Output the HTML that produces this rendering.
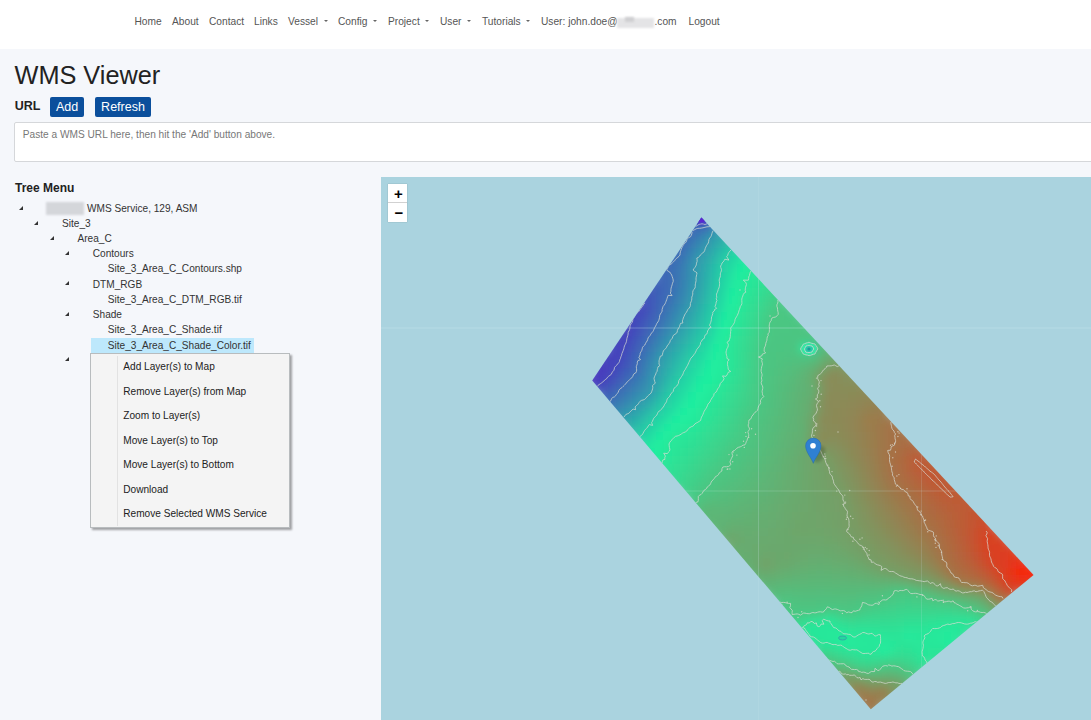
<!DOCTYPE html>
<html><head><meta charset="utf-8">
<style>
*{box-sizing:border-box;margin:0;padding:0}
html,body{width:1091px;height:720px;overflow:hidden;background:#f5f7fb;font-family:"Liberation Sans",sans-serif;}
.a{position:absolute;white-space:nowrap}
#hdr{position:absolute;left:0;top:0;width:1091px;height:49px;background:#fff}
.nav{font-size:10.2px;color:#555;top:16px;line-height:12px}
.car{position:absolute;width:0;height:0;border-left:2.5px solid transparent;border-right:2.5px solid transparent;border-top:2.8px solid #666;top:20px}
h1{position:absolute;left:14.5px;top:60px;font-size:25.3px;font-weight:normal;color:#222;line-height:30px;white-space:nowrap}
.url{left:14.8px;top:99px;font-size:12.5px;font-weight:bold;color:#222;line-height:14px}
.btn{position:absolute;top:97px;height:20px;background:#0b4f9c;border-radius:2px;color:#fff;font-size:12.5px;line-height:20px;text-align:center}
#ta{position:absolute;left:14px;top:122px;width:1100px;height:40px;background:#fff;border:1px solid #d5d7da;border-radius:2px}
.ph{left:22.8px;top:129px;font-size:10.15px;color:#777;line-height:12px}
.tm{left:15px;top:181.5px;font-size:12px;font-weight:bold;color:#222;line-height:13px}
.ti{font-size:10.1px;color:#333;line-height:12px;margin-top:1px}
.tri{position:absolute;width:0;height:0;border-left:4px solid transparent;border-bottom:4px solid #333}
#sel{position:absolute;left:91px;top:338px;width:163px;height:15.5px;background:#bde8fc}
#menu{position:absolute;left:90px;top:353px;width:200px;height:175px;background:#f4f4f4;border:1px solid #b8bcbe;box-shadow:2px 2px 2px rgba(0,0,0,.35)}
#menu .sep{position:absolute;left:26px;top:2px;width:1px;height:170px;background:#e2e2e2}
.mi{font-size:10.1px;color:#222;line-height:12px;margin-top:1px}
#map{position:absolute;left:381px;top:177px;width:710px;height:543px;background:#aad3df;overflow:hidden}
.zb{position:absolute;left:7px;width:19px;height:19px;background:#fff;text-align:center;color:#000;font-weight:bold;padding-left:2px;box-shadow:0 0 1px rgba(0,0,0,.3)}
svg .cells rect{width:8px;height:8px}
</style></head><body>
<div id="hdr"></div>
<div class="a nav" style="left:134.5px">Home</div>
<div class="a nav" style="left:172px">About</div>
<div class="a nav" style="left:209px">Contact</div>
<div class="a nav" style="left:254px">Links</div>
<div class="a nav" style="left:288px">Vessel</div><div class="car" style="left:323.5px"></div>
<div class="a nav" style="left:338px">Config</div><div class="car" style="left:372.5px"></div>
<div class="a nav" style="left:388px">Project</div><div class="car" style="left:425px"></div>
<div class="a nav" style="left:440px">User</div><div class="car" style="left:466.5px"></div>
<div class="a nav" style="left:482px">Tutorials</div><div class="car" style="left:525.5px"></div>
<div class="a nav" style="left:541px">User: john.doe@</div>
<div style="position:absolute;left:617px;top:18px;width:37px;height:10px;background:#e4e4e6;filter:blur(1px)"></div><div style="position:absolute;left:625px;top:17px;width:9px;height:5px;background:#cfcfd2;filter:blur(1px)"></div>
<div class="a nav" style="left:654.5px">.com</div>
<div class="a nav" style="left:688.5px">Logout</div>

<h1>WMS Viewer</h1>
<div class="a url">URL</div>
<div class="btn" style="left:50px;width:34px">Add</div>
<div class="btn" style="left:95px;width:56px">Refresh</div>
<div id="ta"></div>
<div class="a ph">Paste a WMS URL here, then hit the 'Add' button above.</div>

<div class="a tm">Tree Menu</div>
<div id="sel"></div>
<div class="tri" style="left:19px;top:206px"></div>
<div style="position:absolute;left:46px;top:202px;width:38px;height:13px;background:#d4d6da;filter:blur(1px)"></div>
<div class="a ti" style="left:87px;top:202px">WMS Service, 129, ASM</div>
<div class="tri" style="left:34px;top:221px"></div>
<div class="a ti" style="left:62px;top:217px">Site_3</div>
<div class="tri" style="left:49.5px;top:236px"></div>
<div class="a ti" style="left:77.5px;top:232px">Area_C</div>
<div class="tri" style="left:65px;top:251px"></div>
<div class="a ti" style="left:92.8px;top:247px">Contours</div>
<div class="a ti" style="left:107.8px;top:262px">Site_3_Area_C_Contours.shp</div>
<div class="tri" style="left:65px;top:281px"></div>
<div class="a ti" style="left:92.8px;top:278px">DTM_RGB</div>
<div class="a ti" style="left:107.8px;top:293px">Site_3_Area_C_DTM_RGB.tif</div>
<div class="tri" style="left:65px;top:312px"></div>
<div class="a ti" style="left:92.8px;top:308px">Shade</div>
<div class="a ti" style="left:107.8px;top:323px">Site_3_Area_C_Shade.tif</div>
<div class="a ti" style="left:107.8px;top:339px">Site_3_Area_C_Shade_Color.tif</div>
<div class="tri" style="left:65px;top:357px"></div>

<div id="menu"><div class="sep"></div></div>
<div class="a mi" style="left:123.3px;top:360px">Add Layer(s) to Map</div>
<div class="a mi" style="left:123.3px;top:385px">Remove Layer(s) from Map</div>
<div class="a mi" style="left:123.3px;top:409px">Zoom to Layer(s)</div>
<div class="a mi" style="left:123.3px;top:434px">Move Layer(s) to Top</div>
<div class="a mi" style="left:123.3px;top:458px">Move Layer(s) to Bottom</div>
<div class="a mi" style="left:123.3px;top:483px">Download</div>
<div class="a mi" style="left:123.3px;top:507px">Remove Selected WMS Service</div>

<div id="map">
<svg style="position:absolute;left:0;top:0" width="710" height="543" viewBox="381 177 710 543">
<defs><clipPath id="cp"><polygon points="701.4,217.5 1033.6,575.0 870.8,709.2 592.2,380.6"/></clipPath>
<filter id="bl" x="-5%" y="-5%" width="110%" height="110%"><feGaussianBlur stdDeviation="4"/></filter><filter id="bl2"><feGaussianBlur stdDeviation="1.5"/></filter></defs>
<g clip-path="url(#cp)"><g filter="url(#bl)" class="cells"><rect x="696" y="208" fill="#4152ba"/><rect x="688" y="216" fill="#4059b9"/><rect x="696" y="216" fill="#4445bc"/><rect x="704" y="216" fill="#405ab8"/><rect x="688" y="224" fill="#3d66b7"/><rect x="696" y="224" fill="#3c6cb6"/><rect x="704" y="224" fill="#3c6cb6"/><rect x="712" y="224" fill="#3392af"/><rect x="680" y="232" fill="#3c69b6"/><rect x="688" y="232" fill="#3b6fb5"/><rect x="696" y="232" fill="#387cb3"/><rect x="704" y="232" fill="#3390b0"/><rect x="712" y="232" fill="#309fad"/><rect x="720" y="232" fill="#2ea9ac"/><rect x="672" y="240" fill="#3c68b6"/><rect x="680" y="240" fill="#3c6cb6"/><rect x="688" y="240" fill="#3979b3"/><rect x="696" y="240" fill="#3589b1"/><rect x="704" y="240" fill="#319aae"/><rect x="712" y="240" fill="#2ea8ac"/><rect x="720" y="240" fill="#2bb6a9"/><rect x="728" y="240" fill="#28c4a7"/><rect x="672" y="248" fill="#3c6ab6"/><rect x="680" y="248" fill="#3a72b5"/><rect x="688" y="248" fill="#3684b2"/><rect x="696" y="248" fill="#3295af"/><rect x="704" y="248" fill="#30a2ad"/><rect x="712" y="248" fill="#2cb2aa"/><rect x="720" y="248" fill="#28c3a7"/><rect x="728" y="248" fill="#25d0a5"/><rect x="736" y="248" fill="#23daa4"/><rect x="664" y="256" fill="#3c69b6"/><rect x="672" y="256" fill="#3c6cb6"/><rect x="680" y="256" fill="#387ab3"/><rect x="688" y="256" fill="#348eb0"/><rect x="696" y="256" fill="#309ead"/><rect x="704" y="256" fill="#2eaaab"/><rect x="712" y="256" fill="#2abba9"/><rect x="720" y="256" fill="#26cea6"/><rect x="728" y="256" fill="#24d7a4"/><rect x="736" y="256" fill="#21e3a2"/><rect x="744" y="256" fill="#1eeea0"/><rect x="656" y="264" fill="#3d66b7"/><rect x="664" y="264" fill="#3c6cb6"/><rect x="672" y="264" fill="#3a72b5"/><rect x="680" y="264" fill="#3780b2"/><rect x="688" y="264" fill="#3393af"/><rect x="696" y="264" fill="#30a1ad"/><rect x="704" y="264" fill="#2cb0aa"/><rect x="712" y="264" fill="#28c2a8"/><rect x="720" y="264" fill="#25d2a5"/><rect x="728" y="264" fill="#22dea3"/><rect x="736" y="264" fill="#1feba1"/><rect x="744" y="264" fill="#21ed9e"/><rect x="752" y="264" fill="#25ea9b"/><rect x="656" y="272" fill="#3d65b7"/><rect x="664" y="272" fill="#3c6ab6"/><rect x="672" y="272" fill="#3a72b4"/><rect x="680" y="272" fill="#3782b2"/><rect x="688" y="272" fill="#3392af"/><rect x="696" y="272" fill="#2fa2ad"/><rect x="704" y="272" fill="#2cb3aa"/><rect x="712" y="272" fill="#28c5a7"/><rect x="720" y="272" fill="#24d5a4"/><rect x="728" y="272" fill="#21e4a2"/><rect x="736" y="272" fill="#1fef9f"/><rect x="744" y="272" fill="#27e79a"/><rect x="752" y="272" fill="#29e699"/><rect x="760" y="272" fill="#2ce396"/><rect x="648" y="280" fill="#3f5fb8"/><rect x="656" y="280" fill="#3d64b7"/><rect x="664" y="280" fill="#3c6ab6"/><rect x="672" y="280" fill="#3a73b4"/><rect x="680" y="280" fill="#3684b2"/><rect x="688" y="280" fill="#3393af"/><rect x="696" y="280" fill="#2fa4ac"/><rect x="704" y="280" fill="#2bb6a9"/><rect x="712" y="280" fill="#27c9a6"/><rect x="720" y="280" fill="#23d8a4"/><rect x="728" y="280" fill="#20e8a1"/><rect x="736" y="280" fill="#21ed9e"/><rect x="744" y="280" fill="#28e799"/><rect x="752" y="280" fill="#2ce397"/><rect x="760" y="280" fill="#30df94"/><rect x="768" y="280" fill="#35db91"/><rect x="640" y="288" fill="#4156b9"/><rect x="648" y="288" fill="#3f5cb8"/><rect x="656" y="288" fill="#3d64b7"/><rect x="664" y="288" fill="#3c6ab6"/><rect x="672" y="288" fill="#3977b4"/><rect x="680" y="288" fill="#3587b1"/><rect x="688" y="288" fill="#3297af"/><rect x="696" y="288" fill="#2ea7ac"/><rect x="704" y="288" fill="#2ab9a9"/><rect x="712" y="288" fill="#26cba6"/><rect x="720" y="288" fill="#23dba3"/><rect x="728" y="288" fill="#1feda0"/><rect x="736" y="288" fill="#23eb9c"/><rect x="744" y="288" fill="#2ae598"/><rect x="752" y="288" fill="#2fe095"/><rect x="760" y="288" fill="#34db91"/><rect x="768" y="288" fill="#3ad68d"/><rect x="776" y="288" fill="#3fd28a"/><rect x="640" y="296" fill="#424fba"/><rect x="648" y="296" fill="#405ab9"/><rect x="656" y="296" fill="#3d65b7"/><rect x="664" y="296" fill="#3b6eb5"/><rect x="672" y="296" fill="#387db3"/><rect x="680" y="296" fill="#348cb0"/><rect x="688" y="296" fill="#319aae"/><rect x="696" y="296" fill="#2dacab"/><rect x="704" y="296" fill="#29bda8"/><rect x="712" y="296" fill="#26cea6"/><rect x="720" y="296" fill="#22e0a3"/><rect x="728" y="296" fill="#1ef0a0"/><rect x="736" y="296" fill="#25e99b"/><rect x="744" y="296" fill="#2ce397"/><rect x="752" y="296" fill="#32de93"/><rect x="760" y="296" fill="#39d78e"/><rect x="768" y="296" fill="#40d089"/><rect x="776" y="296" fill="#48c984"/><rect x="632" y="304" fill="#4447bc"/><rect x="640" y="304" fill="#4448bb"/><rect x="648" y="304" fill="#405ab9"/><rect x="656" y="304" fill="#3d68b6"/><rect x="664" y="304" fill="#3a74b4"/><rect x="672" y="304" fill="#3683b2"/><rect x="680" y="304" fill="#3392af"/><rect x="688" y="304" fill="#30a1ad"/><rect x="696" y="304" fill="#2cb1aa"/><rect x="704" y="304" fill="#28c2a7"/><rect x="712" y="304" fill="#25d2a5"/><rect x="720" y="304" fill="#21e5a2"/><rect x="728" y="304" fill="#20ee9f"/><rect x="736" y="304" fill="#27e79a"/><rect x="744" y="304" fill="#2ee195"/><rect x="752" y="304" fill="#35db91"/><rect x="760" y="304" fill="#3cd48c"/><rect x="768" y="304" fill="#45cc86"/><rect x="776" y="304" fill="#4ac783"/><rect x="784" y="304" fill="#49c883"/><rect x="624" y="312" fill="#4447bc"/><rect x="632" y="312" fill="#4447bc"/><rect x="640" y="312" fill="#4251ba"/><rect x="648" y="312" fill="#3f5eb8"/><rect x="656" y="312" fill="#3c6cb6"/><rect x="664" y="312" fill="#387bb3"/><rect x="672" y="312" fill="#358ab1"/><rect x="680" y="312" fill="#319aae"/><rect x="688" y="312" fill="#2ea8ac"/><rect x="696" y="312" fill="#2bb7a9"/><rect x="704" y="312" fill="#27c7a7"/><rect x="712" y="312" fill="#24d7a4"/><rect x="720" y="312" fill="#1feaa1"/><rect x="728" y="312" fill="#23ec9d"/><rect x="736" y="312" fill="#2ae598"/><rect x="744" y="312" fill="#30df94"/><rect x="752" y="312" fill="#38d88f"/><rect x="760" y="312" fill="#40d089"/><rect x="768" y="312" fill="#49c883"/><rect x="776" y="312" fill="#4bc682"/><rect x="784" y="312" fill="#4ac782"/><rect x="792" y="312" fill="#4bc682"/><rect x="624" y="320" fill="#4445bc"/><rect x="632" y="320" fill="#434bbb"/><rect x="640" y="320" fill="#4058b9"/><rect x="648" y="320" fill="#3d65b7"/><rect x="656" y="320" fill="#3a72b5"/><rect x="664" y="320" fill="#3782b2"/><rect x="672" y="320" fill="#3392af"/><rect x="680" y="320" fill="#30a0ad"/><rect x="688" y="320" fill="#2daeab"/><rect x="696" y="320" fill="#2abda8"/><rect x="704" y="320" fill="#26cba6"/><rect x="712" y="320" fill="#22dca3"/><rect x="720" y="320" fill="#1ef0a0"/><rect x="728" y="320" fill="#26e99b"/><rect x="736" y="320" fill="#2ce397"/><rect x="744" y="320" fill="#33dd92"/><rect x="752" y="320" fill="#3bd58d"/><rect x="760" y="320" fill="#43cd87"/><rect x="768" y="320" fill="#4bc682"/><rect x="776" y="320" fill="#4bc682"/><rect x="784" y="320" fill="#4bc682"/><rect x="792" y="320" fill="#4cc582"/><rect x="800" y="320" fill="#4dc481"/><rect x="616" y="328" fill="#4445bc"/><rect x="624" y="328" fill="#4445bc"/><rect x="632" y="328" fill="#4250ba"/><rect x="640" y="328" fill="#3f5eb8"/><rect x="648" y="328" fill="#3c6cb6"/><rect x="656" y="328" fill="#387ab3"/><rect x="664" y="328" fill="#358ab1"/><rect x="672" y="328" fill="#319aae"/><rect x="680" y="328" fill="#2ea7ac"/><rect x="688" y="328" fill="#2bb5aa"/><rect x="696" y="328" fill="#28c3a7"/><rect x="704" y="328" fill="#26cea6"/><rect x="712" y="328" fill="#21e2a2"/><rect x="720" y="328" fill="#20ee9f"/><rect x="728" y="328" fill="#28e799"/><rect x="736" y="328" fill="#2ee195"/><rect x="744" y="328" fill="#35da91"/><rect x="752" y="328" fill="#3dd38b"/><rect x="760" y="328" fill="#45cb86"/><rect x="768" y="328" fill="#4bc682"/><rect x="776" y="328" fill="#4bc682"/><rect x="784" y="328" fill="#4bc682"/><rect x="792" y="328" fill="#4cc581"/><rect x="800" y="328" fill="#4dc581"/><rect x="808" y="328" fill="#4ec380"/><rect x="608" y="336" fill="#4544bc"/><rect x="616" y="336" fill="#4445bc"/><rect x="624" y="336" fill="#4447bc"/><rect x="632" y="336" fill="#4156b9"/><rect x="640" y="336" fill="#3d65b7"/><rect x="648" y="336" fill="#3a73b4"/><rect x="656" y="336" fill="#3683b2"/><rect x="664" y="336" fill="#3394af"/><rect x="672" y="336" fill="#30a1ad"/><rect x="680" y="336" fill="#2dafab"/><rect x="688" y="336" fill="#29bda8"/><rect x="696" y="336" fill="#26caa6"/><rect x="704" y="336" fill="#24d7a4"/><rect x="712" y="336" fill="#20e9a1"/><rect x="720" y="336" fill="#22ec9d"/><rect x="728" y="336" fill="#29e699"/><rect x="736" y="336" fill="#30df94"/><rect x="744" y="336" fill="#37d98f"/><rect x="752" y="336" fill="#3fd18a"/><rect x="760" y="336" fill="#48c984"/><rect x="768" y="336" fill="#4bc682"/><rect x="776" y="336" fill="#4cc582"/><rect x="784" y="336" fill="#4cc581"/><rect x="792" y="336" fill="#4cc582"/><rect x="800" y="336" fill="#4bc682"/><rect x="808" y="336" fill="#4cc581"/><rect x="816" y="336" fill="#51c07e"/><rect x="608" y="344" fill="#4544bc"/><rect x="616" y="344" fill="#4445bc"/><rect x="624" y="344" fill="#434cbb"/><rect x="632" y="344" fill="#3f5db8"/><rect x="640" y="344" fill="#3c6cb6"/><rect x="648" y="344" fill="#387cb3"/><rect x="656" y="344" fill="#348db0"/><rect x="664" y="344" fill="#319cae"/><rect x="672" y="344" fill="#2ea9ac"/><rect x="680" y="344" fill="#2bb7a9"/><rect x="688" y="344" fill="#28c5a7"/><rect x="696" y="344" fill="#25d1a5"/><rect x="704" y="344" fill="#22dfa3"/><rect x="712" y="344" fill="#1eeea0"/><rect x="720" y="344" fill="#24eb9c"/><rect x="728" y="344" fill="#2ae498"/><rect x="736" y="344" fill="#31de93"/><rect x="744" y="344" fill="#39d78e"/><rect x="752" y="344" fill="#41cf89"/><rect x="760" y="344" fill="#4bc682"/><rect x="768" y="344" fill="#4cc582"/><rect x="776" y="344" fill="#4cc581"/><rect x="784" y="344" fill="#4dc481"/><rect x="792" y="344" fill="#4cc581"/><rect x="800" y="344" fill="#1feaa1"/><rect x="808" y="344" fill="#28c3a7"/><rect x="816" y="344" fill="#50c17f"/><rect x="824" y="344" fill="#5cb677"/><rect x="600" y="352" fill="#4541bd"/><rect x="608" y="352" fill="#4543bc"/><rect x="616" y="352" fill="#4445bc"/><rect x="624" y="352" fill="#4152ba"/><rect x="632" y="352" fill="#3d64b7"/><rect x="640" y="352" fill="#3a73b4"/><rect x="648" y="352" fill="#3684b2"/><rect x="656" y="352" fill="#3297af"/><rect x="664" y="352" fill="#2fa4ac"/><rect x="672" y="352" fill="#2cb1aa"/><rect x="680" y="352" fill="#29c0a8"/><rect x="688" y="352" fill="#26cea6"/><rect x="696" y="352" fill="#23d8a4"/><rect x="704" y="352" fill="#21e5a2"/><rect x="712" y="352" fill="#1fefa0"/><rect x="720" y="352" fill="#25ea9c"/><rect x="728" y="352" fill="#2be497"/><rect x="736" y="352" fill="#32dd93"/><rect x="744" y="352" fill="#3ad68d"/><rect x="752" y="352" fill="#42ce88"/><rect x="760" y="352" fill="#4bc682"/><rect x="768" y="352" fill="#4cc581"/><rect x="776" y="352" fill="#4ec480"/><rect x="784" y="352" fill="#4ec380"/><rect x="792" y="352" fill="#4ec380"/><rect x="800" y="352" fill="#4cc581"/><rect x="808" y="352" fill="#4bc682"/><rect x="816" y="352" fill="#57ba7a"/><rect x="824" y="352" fill="#63af72"/><rect x="832" y="352" fill="#6ba86d"/><rect x="592" y="360" fill="#463cbd"/><rect x="600" y="360" fill="#4640bd"/><rect x="608" y="360" fill="#4544bc"/><rect x="616" y="360" fill="#4349bb"/><rect x="624" y="360" fill="#4059b9"/><rect x="632" y="360" fill="#3c68b6"/><rect x="640" y="360" fill="#3979b3"/><rect x="648" y="360" fill="#358bb0"/><rect x="656" y="360" fill="#319cae"/><rect x="664" y="360" fill="#2eaaab"/><rect x="672" y="360" fill="#2ab9a9"/><rect x="680" y="360" fill="#27c8a7"/><rect x="688" y="360" fill="#25d3a5"/><rect x="696" y="360" fill="#22dea3"/><rect x="704" y="360" fill="#1feaa1"/><rect x="712" y="360" fill="#20ee9f"/><rect x="720" y="360" fill="#25ea9c"/><rect x="728" y="360" fill="#2be497"/><rect x="736" y="360" fill="#33dd92"/><rect x="744" y="360" fill="#3bd58d"/><rect x="752" y="360" fill="#44cd87"/><rect x="760" y="360" fill="#4bc682"/><rect x="768" y="360" fill="#4dc481"/><rect x="776" y="360" fill="#4fc27f"/><rect x="784" y="360" fill="#51c07e"/><rect x="792" y="360" fill="#53bf7d"/><rect x="800" y="360" fill="#55bc7b"/><rect x="808" y="360" fill="#5ab878"/><rect x="816" y="360" fill="#64af71"/><rect x="824" y="360" fill="#70a369"/><rect x="832" y="360" fill="#74a067"/><rect x="840" y="360" fill="#789c64"/><rect x="592" y="368" fill="#4737be"/><rect x="600" y="368" fill="#4640bd"/><rect x="608" y="368" fill="#4445bc"/><rect x="616" y="368" fill="#4152ba"/><rect x="624" y="368" fill="#3e60b7"/><rect x="632" y="368" fill="#3c6cb6"/><rect x="640" y="368" fill="#377fb2"/><rect x="648" y="368" fill="#3391b0"/><rect x="656" y="368" fill="#30a1ad"/><rect x="664" y="368" fill="#2cb1aa"/><rect x="672" y="368" fill="#29c0a8"/><rect x="680" y="368" fill="#26cea6"/><rect x="688" y="368" fill="#23d9a4"/><rect x="696" y="368" fill="#21e4a2"/><rect x="704" y="368" fill="#1eefa0"/><rect x="712" y="368" fill="#21ed9e"/><rect x="720" y="368" fill="#26e99b"/><rect x="728" y="368" fill="#2ce397"/><rect x="736" y="368" fill="#34dc91"/><rect x="744" y="368" fill="#3cd48c"/><rect x="752" y="368" fill="#44cc87"/><rect x="760" y="368" fill="#4bc682"/><rect x="768" y="368" fill="#4ec380"/><rect x="776" y="368" fill="#51c17e"/><rect x="784" y="368" fill="#54be7c"/><rect x="792" y="368" fill="#57bb7a"/><rect x="800" y="368" fill="#5db676"/><rect x="808" y="368" fill="#64af71"/><rect x="816" y="368" fill="#71a369"/><rect x="824" y="368" fill="#81935e"/><rect x="832" y="368" fill="#8b8b58"/><rect x="840" y="368" fill="#81945e"/><rect x="848" y="368" fill="#80955f"/><rect x="584" y="376" fill="#492fbf"/><rect x="592" y="376" fill="#4932bf"/><rect x="600" y="376" fill="#4445bc"/><rect x="608" y="376" fill="#424fba"/><rect x="616" y="376" fill="#3f5db8"/><rect x="624" y="376" fill="#3c6cb6"/><rect x="632" y="376" fill="#3976b4"/><rect x="640" y="376" fill="#3686b1"/><rect x="648" y="376" fill="#3296af"/><rect x="656" y="376" fill="#2fa6ac"/><rect x="664" y="376" fill="#2bb8a9"/><rect x="672" y="376" fill="#27c9a6"/><rect x="680" y="376" fill="#24d4a5"/><rect x="688" y="376" fill="#22dfa3"/><rect x="696" y="376" fill="#1feaa1"/><rect x="704" y="376" fill="#1fef9f"/><rect x="712" y="376" fill="#23eb9c"/><rect x="720" y="376" fill="#27e79a"/><rect x="728" y="376" fill="#2ee195"/><rect x="736" y="376" fill="#36da90"/><rect x="744" y="376" fill="#3dd38b"/><rect x="752" y="376" fill="#45cc86"/><rect x="760" y="376" fill="#4cc682"/><rect x="768" y="376" fill="#4fc380"/><rect x="776" y="376" fill="#52bf7d"/><rect x="784" y="376" fill="#56bc7b"/><rect x="792" y="376" fill="#5ab878"/><rect x="800" y="376" fill="#60b374"/><rect x="808" y="376" fill="#66ad70"/><rect x="816" y="376" fill="#7f965f"/><rect x="824" y="376" fill="#8b8b58"/><rect x="832" y="376" fill="#898c59"/><rect x="840" y="376" fill="#868f5b"/><rect x="848" y="376" fill="#85905c"/><rect x="856" y="376" fill="#85905c"/><rect x="592" y="384" fill="#4447bc"/><rect x="600" y="384" fill="#4251ba"/><rect x="608" y="384" fill="#3f5cb8"/><rect x="616" y="384" fill="#3c69b6"/><rect x="624" y="384" fill="#3a74b4"/><rect x="632" y="384" fill="#3781b2"/><rect x="640" y="384" fill="#348db0"/><rect x="648" y="384" fill="#319aae"/><rect x="656" y="384" fill="#2daeab"/><rect x="664" y="384" fill="#29c1a8"/><rect x="672" y="384" fill="#25d0a5"/><rect x="680" y="384" fill="#23daa4"/><rect x="688" y="384" fill="#20e5a2"/><rect x="696" y="384" fill="#1ef0a0"/><rect x="704" y="384" fill="#21ed9e"/><rect x="712" y="384" fill="#26e89a"/><rect x="720" y="384" fill="#2be497"/><rect x="728" y="384" fill="#31de93"/><rect x="736" y="384" fill="#38d88f"/><rect x="744" y="384" fill="#3fd18a"/><rect x="752" y="384" fill="#46cb86"/><rect x="760" y="384" fill="#4cc582"/><rect x="768" y="384" fill="#4fc27f"/><rect x="776" y="384" fill="#53be7c"/><rect x="784" y="384" fill="#57ba7a"/><rect x="792" y="384" fill="#5cb677"/><rect x="800" y="384" fill="#60b274"/><rect x="808" y="384" fill="#64af71"/><rect x="816" y="384" fill="#769e66"/><rect x="824" y="384" fill="#888d5a"/><rect x="832" y="384" fill="#898c59"/><rect x="840" y="384" fill="#888d59"/><rect x="848" y="384" fill="#888d59"/><rect x="856" y="384" fill="#898c59"/><rect x="864" y="384" fill="#8a8b58"/><rect x="600" y="392" fill="#3e5fb8"/><rect x="608" y="392" fill="#3c69b6"/><rect x="616" y="392" fill="#3a73b4"/><rect x="624" y="392" fill="#377fb2"/><rect x="632" y="392" fill="#358cb0"/><rect x="640" y="392" fill="#3297af"/><rect x="648" y="392" fill="#2fa3ad"/><rect x="656" y="392" fill="#2bb8a9"/><rect x="664" y="392" fill="#26cba6"/><rect x="672" y="392" fill="#24d6a4"/><rect x="680" y="392" fill="#21e1a2"/><rect x="688" y="392" fill="#1feca1"/><rect x="696" y="392" fill="#20ee9f"/><rect x="704" y="392" fill="#24ea9c"/><rect x="712" y="392" fill="#28e699"/><rect x="720" y="392" fill="#2ee195"/><rect x="728" y="392" fill="#34dc91"/><rect x="736" y="392" fill="#3ad68d"/><rect x="744" y="392" fill="#41d089"/><rect x="752" y="392" fill="#47ca85"/><rect x="760" y="392" fill="#4cc581"/><rect x="768" y="392" fill="#50c17e"/><rect x="776" y="392" fill="#54bd7c"/><rect x="784" y="392" fill="#59b979"/><rect x="792" y="392" fill="#5db576"/><rect x="800" y="392" fill="#61b173"/><rect x="808" y="392" fill="#64af71"/><rect x="816" y="392" fill="#7c9861"/><rect x="824" y="392" fill="#8b8b58"/><rect x="832" y="392" fill="#8a8b58"/><rect x="840" y="392" fill="#8a8b58"/><rect x="848" y="392" fill="#8b8a57"/><rect x="856" y="392" fill="#8c8957"/><rect x="864" y="392" fill="#8e8856"/><rect x="872" y="392" fill="#8f8655"/><rect x="600" y="400" fill="#3b6eb5"/><rect x="608" y="400" fill="#3a74b4"/><rect x="616" y="400" fill="#3780b2"/><rect x="624" y="400" fill="#348cb0"/><rect x="632" y="400" fill="#3297ae"/><rect x="640" y="400" fill="#30a2ad"/><rect x="648" y="400" fill="#2cb3aa"/><rect x="656" y="400" fill="#28c5a7"/><rect x="664" y="400" fill="#25d1a5"/><rect x="672" y="400" fill="#22dda3"/><rect x="680" y="400" fill="#20e8a1"/><rect x="688" y="400" fill="#1ff0a0"/><rect x="696" y="400" fill="#22ec9d"/><rect x="704" y="400" fill="#27e79a"/><rect x="712" y="400" fill="#2ce397"/><rect x="720" y="400" fill="#31de93"/><rect x="728" y="400" fill="#37d990"/><rect x="736" y="400" fill="#3dd38b"/><rect x="744" y="400" fill="#43ce87"/><rect x="752" y="400" fill="#49c884"/><rect x="760" y="400" fill="#4dc481"/><rect x="768" y="400" fill="#51c07e"/><rect x="776" y="400" fill="#56bc7b"/><rect x="784" y="400" fill="#5ab878"/><rect x="792" y="400" fill="#5eb475"/><rect x="800" y="400" fill="#63b072"/><rect x="808" y="400" fill="#6ba86d"/><rect x="816" y="400" fill="#81935e"/><rect x="824" y="400" fill="#8a8b58"/><rect x="832" y="400" fill="#8b8b58"/><rect x="840" y="400" fill="#8c8a57"/><rect x="848" y="400" fill="#8d8856"/><rect x="856" y="400" fill="#8f8655"/><rect x="864" y="400" fill="#918453"/><rect x="872" y="400" fill="#938352"/><rect x="880" y="400" fill="#958151"/><rect x="608" y="408" fill="#3685b1"/><rect x="616" y="408" fill="#348eb0"/><rect x="624" y="408" fill="#319aae"/><rect x="632" y="408" fill="#2fa3ad"/><rect x="640" y="408" fill="#2cb1aa"/><rect x="648" y="408" fill="#29c1a8"/><rect x="656" y="408" fill="#26cea6"/><rect x="664" y="408" fill="#23daa4"/><rect x="672" y="408" fill="#20e5a2"/><rect x="680" y="408" fill="#1ef0a0"/><rect x="688" y="408" fill="#21ed9e"/><rect x="696" y="408" fill="#25e99b"/><rect x="704" y="408" fill="#29e598"/><rect x="712" y="408" fill="#2fe195"/><rect x="720" y="408" fill="#34dc91"/><rect x="728" y="408" fill="#3ad68e"/><rect x="736" y="408" fill="#40d089"/><rect x="744" y="408" fill="#46cb85"/><rect x="752" y="408" fill="#4bc682"/><rect x="760" y="408" fill="#4fc380"/><rect x="768" y="408" fill="#53bf7d"/><rect x="776" y="408" fill="#57bb7a"/><rect x="784" y="408" fill="#5bb777"/><rect x="792" y="408" fill="#5fb375"/><rect x="800" y="408" fill="#63b072"/><rect x="808" y="408" fill="#6ba86d"/><rect x="816" y="408" fill="#81945e"/><rect x="824" y="408" fill="#898c59"/><rect x="832" y="408" fill="#8b8a57"/><rect x="840" y="408" fill="#8d8956"/><rect x="848" y="408" fill="#8f8755"/><rect x="856" y="408" fill="#928453"/><rect x="864" y="408" fill="#968050"/><rect x="872" y="408" fill="#987e4f"/><rect x="880" y="408" fill="#997d4e"/><rect x="616" y="416" fill="#319dae"/><rect x="624" y="416" fill="#2fa5ac"/><rect x="632" y="416" fill="#2cb1aa"/><rect x="640" y="416" fill="#29bfa8"/><rect x="648" y="416" fill="#26cea6"/><rect x="656" y="416" fill="#23d8a4"/><rect x="664" y="416" fill="#21e4a2"/><rect x="672" y="416" fill="#1eeea0"/><rect x="680" y="416" fill="#21ee9e"/><rect x="688" y="416" fill="#24ea9c"/><rect x="696" y="416" fill="#27e79a"/><rect x="704" y="416" fill="#2ce396"/><rect x="712" y="416" fill="#32de93"/><rect x="720" y="416" fill="#37d98f"/><rect x="728" y="416" fill="#3dd38c"/><rect x="736" y="416" fill="#43ce88"/><rect x="744" y="416" fill="#4bc682"/><rect x="752" y="416" fill="#4dc481"/><rect x="760" y="416" fill="#50c17e"/><rect x="768" y="416" fill="#54be7c"/><rect x="776" y="416" fill="#58ba79"/><rect x="784" y="416" fill="#5cb677"/><rect x="792" y="416" fill="#60b274"/><rect x="800" y="416" fill="#65ae71"/><rect x="808" y="416" fill="#70a369"/><rect x="816" y="416" fill="#8b8b58"/><rect x="824" y="416" fill="#8a8b58"/><rect x="832" y="416" fill="#8b8a57"/><rect x="840" y="416" fill="#8d8856"/><rect x="848" y="416" fill="#908654"/><rect x="856" y="416" fill="#948251"/><rect x="864" y="416" fill="#9c7b4c"/><rect x="872" y="416" fill="#9b7b4c"/><rect x="880" y="416" fill="#9e794b"/><rect x="888" y="416" fill="#a27548"/><rect x="624" y="424" fill="#2cb3aa"/><rect x="632" y="424" fill="#29bea8"/><rect x="640" y="424" fill="#26cba6"/><rect x="648" y="424" fill="#24d6a4"/><rect x="656" y="424" fill="#21e2a2"/><rect x="664" y="424" fill="#1eeea0"/><rect x="672" y="424" fill="#21ed9e"/><rect x="680" y="424" fill="#25ea9c"/><rect x="688" y="424" fill="#27e79a"/><rect x="696" y="424" fill="#2be397"/><rect x="704" y="424" fill="#30df94"/><rect x="712" y="424" fill="#35db91"/><rect x="720" y="424" fill="#3ad68d"/><rect x="728" y="424" fill="#3fd18a"/><rect x="736" y="424" fill="#45cc86"/><rect x="744" y="424" fill="#4bc682"/><rect x="752" y="424" fill="#4ec380"/><rect x="760" y="424" fill="#52c07e"/><rect x="768" y="424" fill="#55bc7b"/><rect x="776" y="424" fill="#59b979"/><rect x="784" y="424" fill="#5db576"/><rect x="792" y="424" fill="#61b274"/><rect x="800" y="424" fill="#64af71"/><rect x="808" y="424" fill="#71a369"/><rect x="816" y="424" fill="#84905c"/><rect x="824" y="424" fill="#898c59"/><rect x="832" y="424" fill="#8a8b58"/><rect x="840" y="424" fill="#8d8956"/><rect x="848" y="424" fill="#908654"/><rect x="856" y="424" fill="#948251"/><rect x="864" y="424" fill="#997e4e"/><rect x="872" y="424" fill="#9c7a4c"/><rect x="880" y="424" fill="#a07749"/><rect x="888" y="424" fill="#a67146"/><rect x="896" y="424" fill="#a47346"/><rect x="632" y="432" fill="#27c9a6"/><rect x="640" y="432" fill="#24d4a5"/><rect x="648" y="432" fill="#22e0a3"/><rect x="656" y="432" fill="#1feda1"/><rect x="664" y="432" fill="#21ed9e"/><rect x="672" y="432" fill="#27e79a"/><rect x="680" y="432" fill="#28e699"/><rect x="688" y="432" fill="#2ce397"/><rect x="696" y="432" fill="#2fe094"/><rect x="704" y="432" fill="#34dc92"/><rect x="712" y="432" fill="#38d78e"/><rect x="720" y="432" fill="#3dd38b"/><rect x="728" y="432" fill="#42ce88"/><rect x="736" y="432" fill="#47ca85"/><rect x="744" y="432" fill="#4bc682"/><rect x="752" y="432" fill="#4fc27f"/><rect x="760" y="432" fill="#53be7d"/><rect x="768" y="432" fill="#57bb7a"/><rect x="776" y="432" fill="#5bb778"/><rect x="784" y="432" fill="#5eb475"/><rect x="792" y="432" fill="#62b173"/><rect x="800" y="432" fill="#64af71"/><rect x="808" y="432" fill="#769e66"/><rect x="816" y="432" fill="#8b8b58"/><rect x="824" y="432" fill="#888d59"/><rect x="832" y="432" fill="#898c59"/><rect x="840" y="432" fill="#8b8a57"/><rect x="848" y="432" fill="#8f8755"/><rect x="856" y="432" fill="#938352"/><rect x="864" y="432" fill="#977f4f"/><rect x="872" y="432" fill="#9c7b4c"/><rect x="880" y="432" fill="#a07649"/><rect x="888" y="432" fill="#a57246"/><rect x="896" y="432" fill="#a67145"/><rect x="904" y="432" fill="#a86f44"/><rect x="640" y="440" fill="#22dea3"/><rect x="648" y="440" fill="#20e9a1"/><rect x="656" y="440" fill="#20ee9f"/><rect x="664" y="440" fill="#27e79a"/><rect x="672" y="440" fill="#29e699"/><rect x="680" y="440" fill="#2ce397"/><rect x="688" y="440" fill="#2fe095"/><rect x="696" y="440" fill="#33dc92"/><rect x="704" y="440" fill="#37d88f"/><rect x="712" y="440" fill="#3cd48c"/><rect x="720" y="440" fill="#41cf89"/><rect x="728" y="440" fill="#46cb85"/><rect x="736" y="440" fill="#4ac783"/><rect x="744" y="440" fill="#4dc481"/><rect x="752" y="440" fill="#51c17e"/><rect x="760" y="440" fill="#55bd7c"/><rect x="768" y="440" fill="#58ba79"/><rect x="776" y="440" fill="#5cb677"/><rect x="784" y="440" fill="#60b374"/><rect x="792" y="440" fill="#63af72"/><rect x="800" y="440" fill="#67ac6f"/><rect x="808" y="440" fill="#73a067"/><rect x="816" y="440" fill="#8b8b58"/><rect x="824" y="440" fill="#83915c"/><rect x="832" y="440" fill="#868f5b"/><rect x="840" y="440" fill="#898c59"/><rect x="848" y="440" fill="#8d8856"/><rect x="856" y="440" fill="#928453"/><rect x="864" y="440" fill="#968050"/><rect x="872" y="440" fill="#9b7b4c"/><rect x="880" y="440" fill="#a07649"/><rect x="888" y="440" fill="#a57246"/><rect x="896" y="440" fill="#a86f44"/><rect x="904" y="440" fill="#ab6c42"/><rect x="912" y="440" fill="#ae6a40"/><rect x="640" y="448" fill="#20e7a1"/><rect x="648" y="448" fill="#1ef0a0"/><rect x="656" y="448" fill="#22ec9d"/><rect x="664" y="448" fill="#27e79a"/><rect x="672" y="448" fill="#2be497"/><rect x="680" y="448" fill="#2fe095"/><rect x="688" y="448" fill="#33dd92"/><rect x="696" y="448" fill="#37d990"/><rect x="704" y="448" fill="#3bd58d"/><rect x="712" y="448" fill="#3fd18a"/><rect x="720" y="448" fill="#44cc86"/><rect x="728" y="448" fill="#4bc682"/><rect x="736" y="448" fill="#4cc581"/><rect x="744" y="448" fill="#4fc27f"/><rect x="752" y="448" fill="#53bf7d"/><rect x="760" y="448" fill="#56bb7a"/><rect x="768" y="448" fill="#5ab878"/><rect x="776" y="448" fill="#5eb576"/><rect x="784" y="448" fill="#61b173"/><rect x="792" y="448" fill="#65ae71"/><rect x="800" y="448" fill="#6aa96d"/><rect x="808" y="448" fill="#70a369"/><rect x="816" y="448" fill="#769e66"/><rect x="824" y="448" fill="#7c9861"/><rect x="832" y="448" fill="#82935e"/><rect x="840" y="448" fill="#868f5b"/><rect x="848" y="448" fill="#8b8a57"/><rect x="856" y="448" fill="#908654"/><rect x="864" y="448" fill="#958151"/><rect x="872" y="448" fill="#9b7c4d"/><rect x="880" y="448" fill="#a17649"/><rect x="888" y="448" fill="#a67145"/><rect x="896" y="448" fill="#aa6d42"/><rect x="904" y="448" fill="#af683f"/><rect x="912" y="448" fill="#b4643c"/><rect x="920" y="448" fill="#b4643c"/><rect x="648" y="456" fill="#21ed9e"/><rect x="656" y="456" fill="#25e99b"/><rect x="664" y="456" fill="#29e699"/><rect x="672" y="456" fill="#2de296"/><rect x="680" y="456" fill="#32de93"/><rect x="688" y="456" fill="#36da90"/><rect x="696" y="456" fill="#3ad68d"/><rect x="704" y="456" fill="#3fd28a"/><rect x="712" y="456" fill="#43cd87"/><rect x="720" y="456" fill="#47c984"/><rect x="728" y="456" fill="#4bc682"/><rect x="736" y="456" fill="#4ec380"/><rect x="744" y="456" fill="#51c07e"/><rect x="752" y="456" fill="#55bd7b"/><rect x="760" y="456" fill="#58ba79"/><rect x="768" y="456" fill="#5cb777"/><rect x="776" y="456" fill="#5fb375"/><rect x="784" y="456" fill="#63b072"/><rect x="792" y="456" fill="#66ac70"/><rect x="800" y="456" fill="#6ba86d"/><rect x="808" y="456" fill="#6fa46a"/><rect x="816" y="456" fill="#74a067"/><rect x="824" y="456" fill="#789c64"/><rect x="832" y="456" fill="#7e9760"/><rect x="840" y="456" fill="#83915c"/><rect x="848" y="456" fill="#898c59"/><rect x="856" y="456" fill="#8e8755"/><rect x="864" y="456" fill="#948252"/><rect x="872" y="456" fill="#9a7d4e"/><rect x="880" y="456" fill="#a07649"/><rect x="888" y="456" fill="#a77045"/><rect x="896" y="456" fill="#ac6c41"/><rect x="904" y="456" fill="#b3643c"/><rect x="912" y="456" fill="#bf5a35"/><rect x="920" y="456" fill="#bb5d37"/><rect x="928" y="456" fill="#b96039"/><rect x="656" y="464" fill="#28e799"/><rect x="664" y="464" fill="#2ce397"/><rect x="672" y="464" fill="#30df94"/><rect x="680" y="464" fill="#35db91"/><rect x="688" y="464" fill="#39d78e"/><rect x="696" y="464" fill="#3ed28b"/><rect x="704" y="464" fill="#42ce88"/><rect x="712" y="464" fill="#47ca85"/><rect x="720" y="464" fill="#4bc682"/><rect x="728" y="464" fill="#4dc481"/><rect x="736" y="464" fill="#50c17e"/><rect x="744" y="464" fill="#54be7c"/><rect x="752" y="464" fill="#57bb7a"/><rect x="760" y="464" fill="#5ab878"/><rect x="768" y="464" fill="#5db576"/><rect x="776" y="464" fill="#60b274"/><rect x="784" y="464" fill="#64af71"/><rect x="792" y="464" fill="#67ac6f"/><rect x="800" y="464" fill="#6ba86d"/><rect x="808" y="464" fill="#6fa56a"/><rect x="816" y="464" fill="#72a168"/><rect x="824" y="464" fill="#769e66"/><rect x="832" y="464" fill="#7b9962"/><rect x="840" y="464" fill="#81945e"/><rect x="848" y="464" fill="#868f5b"/><rect x="856" y="464" fill="#8c8957"/><rect x="864" y="464" fill="#928453"/><rect x="872" y="464" fill="#987e4f"/><rect x="880" y="464" fill="#9f774a"/><rect x="888" y="464" fill="#a67146"/><rect x="896" y="464" fill="#ac6c42"/><rect x="904" y="464" fill="#b3653d"/><rect x="912" y="464" fill="#bb5d37"/><rect x="920" y="464" fill="#bf5a35"/><rect x="928" y="464" fill="#bd5b36"/><rect x="936" y="464" fill="#bb5d37"/><rect x="664" y="472" fill="#2fe095"/><rect x="672" y="472" fill="#33dc92"/><rect x="680" y="472" fill="#38d88f"/><rect x="688" y="472" fill="#3dd38c"/><rect x="696" y="472" fill="#41cf88"/><rect x="704" y="472" fill="#46cb85"/><rect x="712" y="472" fill="#4bc682"/><rect x="720" y="472" fill="#4dc480"/><rect x="728" y="472" fill="#50c17f"/><rect x="736" y="472" fill="#53bf7d"/><rect x="744" y="472" fill="#56bc7b"/><rect x="752" y="472" fill="#59b979"/><rect x="760" y="472" fill="#5cb677"/><rect x="768" y="472" fill="#5fb475"/><rect x="776" y="472" fill="#62b173"/><rect x="784" y="472" fill="#65ae71"/><rect x="792" y="472" fill="#68ab6f"/><rect x="800" y="472" fill="#6ba86c"/><rect x="808" y="472" fill="#6fa56a"/><rect x="816" y="472" fill="#72a268"/><rect x="824" y="472" fill="#759f66"/><rect x="832" y="472" fill="#799b64"/><rect x="840" y="472" fill="#7e9660"/><rect x="848" y="472" fill="#84915c"/><rect x="856" y="472" fill="#8a8c58"/><rect x="864" y="472" fill="#908654"/><rect x="872" y="472" fill="#968050"/><rect x="880" y="472" fill="#9d794b"/><rect x="888" y="472" fill="#a67146"/><rect x="896" y="472" fill="#aa6e43"/><rect x="904" y="472" fill="#b0683f"/><rect x="912" y="472" fill="#b6623b"/><rect x="920" y="472" fill="#bc5c37"/><rect x="928" y="472" fill="#c45531"/><rect x="936" y="472" fill="#bf5a35"/><rect x="944" y="472" fill="#bc5d37"/><rect x="672" y="480" fill="#37d990"/><rect x="680" y="480" fill="#3bd58c"/><rect x="688" y="480" fill="#40d089"/><rect x="696" y="480" fill="#45cb86"/><rect x="704" y="480" fill="#4ac783"/><rect x="712" y="480" fill="#4dc480"/><rect x="720" y="480" fill="#50c17e"/><rect x="728" y="480" fill="#53bf7d"/><rect x="736" y="480" fill="#56bc7b"/><rect x="744" y="480" fill="#58ba79"/><rect x="752" y="480" fill="#5bb777"/><rect x="760" y="480" fill="#5eb576"/><rect x="768" y="480" fill="#60b274"/><rect x="776" y="480" fill="#63b072"/><rect x="784" y="480" fill="#66ad70"/><rect x="792" y="480" fill="#69aa6e"/><rect x="800" y="480" fill="#6ca86c"/><rect x="808" y="480" fill="#6ea56a"/><rect x="816" y="480" fill="#71a269"/><rect x="824" y="480" fill="#74a067"/><rect x="832" y="480" fill="#779d65"/><rect x="840" y="480" fill="#7c9962"/><rect x="848" y="480" fill="#81935e"/><rect x="856" y="480" fill="#878e5a"/><rect x="864" y="480" fill="#8d8856"/><rect x="872" y="480" fill="#948252"/><rect x="880" y="480" fill="#9a7c4d"/><rect x="888" y="480" fill="#a27548"/><rect x="896" y="480" fill="#a77045"/><rect x="904" y="480" fill="#ac6c42"/><rect x="912" y="480" fill="#b1673e"/><rect x="920" y="480" fill="#b7613a"/><rect x="928" y="480" fill="#bd5b36"/><rect x="936" y="480" fill="#bf5a35"/><rect x="944" y="480" fill="#be5b35"/><rect x="952" y="480" fill="#bc5c36"/><rect x="680" y="488" fill="#3fd18a"/><rect x="688" y="488" fill="#44cd87"/><rect x="696" y="488" fill="#49c783"/><rect x="704" y="488" fill="#4dc481"/><rect x="712" y="488" fill="#51c17e"/><rect x="720" y="488" fill="#54be7c"/><rect x="728" y="488" fill="#56bc7b"/><rect x="736" y="488" fill="#58ba79"/><rect x="744" y="488" fill="#5bb778"/><rect x="752" y="488" fill="#5db576"/><rect x="760" y="488" fill="#5fb374"/><rect x="768" y="488" fill="#62b173"/><rect x="776" y="488" fill="#64ae71"/><rect x="784" y="488" fill="#67ac6f"/><rect x="792" y="488" fill="#69aa6e"/><rect x="800" y="488" fill="#6ca76c"/><rect x="808" y="488" fill="#6ea56a"/><rect x="816" y="488" fill="#71a369"/><rect x="824" y="488" fill="#73a167"/><rect x="832" y="488" fill="#759f66"/><rect x="840" y="488" fill="#799c64"/><rect x="848" y="488" fill="#7f9660"/><rect x="856" y="488" fill="#85905c"/><rect x="864" y="488" fill="#8b8b58"/><rect x="872" y="488" fill="#918554"/><rect x="880" y="488" fill="#977f4f"/><rect x="888" y="488" fill="#9d794b"/><rect x="896" y="488" fill="#a37447"/><rect x="904" y="488" fill="#a77045"/><rect x="912" y="488" fill="#ac6b41"/><rect x="920" y="488" fill="#b2663d"/><rect x="928" y="488" fill="#b8613a"/><rect x="936" y="488" fill="#bd5c36"/><rect x="944" y="488" fill="#bf5a35"/><rect x="952" y="488" fill="#be5b36"/><rect x="960" y="488" fill="#bd5b36"/><rect x="688" y="496" fill="#48c984"/><rect x="696" y="496" fill="#4dc481"/><rect x="704" y="496" fill="#52bf7d"/><rect x="712" y="496" fill="#55bd7b"/><rect x="720" y="496" fill="#57bb7a"/><rect x="728" y="496" fill="#59b979"/><rect x="736" y="496" fill="#5bb777"/><rect x="744" y="496" fill="#5db576"/><rect x="752" y="496" fill="#5fb375"/><rect x="760" y="496" fill="#61b173"/><rect x="768" y="496" fill="#63af72"/><rect x="776" y="496" fill="#66ad70"/><rect x="784" y="496" fill="#68ab6f"/><rect x="792" y="496" fill="#6aa96d"/><rect x="800" y="496" fill="#6ca76c"/><rect x="808" y="496" fill="#6ea56a"/><rect x="816" y="496" fill="#70a369"/><rect x="824" y="496" fill="#72a168"/><rect x="832" y="496" fill="#74a067"/><rect x="840" y="496" fill="#769e66"/><rect x="848" y="496" fill="#7c9861"/><rect x="856" y="496" fill="#82925d"/><rect x="864" y="496" fill="#888d59"/><rect x="872" y="496" fill="#8e8856"/><rect x="880" y="496" fill="#938252"/><rect x="888" y="496" fill="#997d4e"/><rect x="896" y="496" fill="#9e784a"/><rect x="904" y="496" fill="#a37347"/><rect x="912" y="496" fill="#a87044"/><rect x="920" y="496" fill="#ae6a40"/><rect x="928" y="496" fill="#b3653d"/><rect x="936" y="496" fill="#b86039"/><rect x="944" y="496" fill="#bc5d37"/><rect x="952" y="496" fill="#bd5c36"/><rect x="960" y="496" fill="#be5b36"/><rect x="968" y="496" fill="#bf5a35"/><rect x="688" y="504" fill="#4cc582"/><rect x="696" y="504" fill="#54bd7c"/><rect x="704" y="504" fill="#5bb777"/><rect x="712" y="504" fill="#5ab878"/><rect x="720" y="504" fill="#5bb778"/><rect x="728" y="504" fill="#5cb677"/><rect x="736" y="504" fill="#5eb475"/><rect x="744" y="504" fill="#5fb374"/><rect x="752" y="504" fill="#61b173"/><rect x="760" y="504" fill="#63b072"/><rect x="768" y="504" fill="#65ae71"/><rect x="776" y="504" fill="#67ac70"/><rect x="784" y="504" fill="#69aa6e"/><rect x="792" y="504" fill="#6ba86d"/><rect x="800" y="504" fill="#6da76c"/><rect x="808" y="504" fill="#6ea56a"/><rect x="816" y="504" fill="#70a369"/><rect x="824" y="504" fill="#72a268"/><rect x="832" y="504" fill="#74a067"/><rect x="840" y="504" fill="#759e66"/><rect x="848" y="504" fill="#7a9a62"/><rect x="856" y="504" fill="#80955f"/><rect x="864" y="504" fill="#85905b"/><rect x="872" y="504" fill="#8b8b58"/><rect x="880" y="504" fill="#908654"/><rect x="888" y="504" fill="#958150"/><rect x="896" y="504" fill="#9b7c4d"/><rect x="904" y="504" fill="#a07749"/><rect x="912" y="504" fill="#a57246"/><rect x="920" y="504" fill="#aa6d43"/><rect x="928" y="504" fill="#af683f"/><rect x="936" y="504" fill="#b4643c"/><rect x="944" y="504" fill="#b86039"/><rect x="952" y="504" fill="#bb5d37"/><rect x="960" y="504" fill="#be5b36"/><rect x="968" y="504" fill="#c05834"/><rect x="976" y="504" fill="#c35632"/><rect x="696" y="512" fill="#57bb7a"/><rect x="704" y="512" fill="#5db576"/><rect x="712" y="512" fill="#5db576"/><rect x="720" y="512" fill="#5eb576"/><rect x="728" y="512" fill="#5fb375"/><rect x="736" y="512" fill="#61b274"/><rect x="744" y="512" fill="#62b173"/><rect x="752" y="512" fill="#63af72"/><rect x="760" y="512" fill="#65ae71"/><rect x="768" y="512" fill="#66ad70"/><rect x="776" y="512" fill="#68ab6f"/><rect x="784" y="512" fill="#6aa96e"/><rect x="792" y="512" fill="#6ca86c"/><rect x="800" y="512" fill="#6da66b"/><rect x="808" y="512" fill="#6ea56a"/><rect x="816" y="512" fill="#70a46a"/><rect x="824" y="512" fill="#71a268"/><rect x="832" y="512" fill="#73a167"/><rect x="840" y="512" fill="#759f66"/><rect x="848" y="512" fill="#799b64"/><rect x="856" y="512" fill="#7e9760"/><rect x="864" y="512" fill="#83925d"/><rect x="872" y="512" fill="#888d59"/><rect x="880" y="512" fill="#8d8956"/><rect x="888" y="512" fill="#928453"/><rect x="896" y="512" fill="#977f4f"/><rect x="904" y="512" fill="#9c7a4c"/><rect x="912" y="512" fill="#a27548"/><rect x="920" y="512" fill="#a77045"/><rect x="928" y="512" fill="#ac6b41"/><rect x="936" y="512" fill="#b1673e"/><rect x="944" y="512" fill="#b5633b"/><rect x="952" y="512" fill="#ba5f38"/><rect x="960" y="512" fill="#be5b36"/><rect x="968" y="512" fill="#c25733"/><rect x="976" y="512" fill="#c65330"/><rect x="984" y="512" fill="#c9512e"/><rect x="704" y="520" fill="#5ab878"/><rect x="712" y="520" fill="#5eb576"/><rect x="720" y="520" fill="#60b274"/><rect x="728" y="520" fill="#63b072"/><rect x="736" y="520" fill="#63af72"/><rect x="744" y="520" fill="#64af71"/><rect x="752" y="520" fill="#65ae71"/><rect x="760" y="520" fill="#66ad70"/><rect x="768" y="520" fill="#67ab6f"/><rect x="776" y="520" fill="#69aa6e"/><rect x="784" y="520" fill="#6ba86d"/><rect x="792" y="520" fill="#6da66b"/><rect x="800" y="520" fill="#6ea56b"/><rect x="808" y="520" fill="#6ea56a"/><rect x="816" y="520" fill="#6fa46a"/><rect x="824" y="520" fill="#71a369"/><rect x="832" y="520" fill="#72a168"/><rect x="840" y="520" fill="#749f66"/><rect x="848" y="520" fill="#789c64"/><rect x="856" y="520" fill="#7c9861"/><rect x="864" y="520" fill="#80945e"/><rect x="872" y="520" fill="#85905b"/><rect x="880" y="520" fill="#8a8c58"/><rect x="888" y="520" fill="#8e8755"/><rect x="896" y="520" fill="#938252"/><rect x="904" y="520" fill="#997e4e"/><rect x="912" y="520" fill="#9e784a"/><rect x="920" y="520" fill="#a47346"/><rect x="928" y="520" fill="#a96e43"/><rect x="936" y="520" fill="#ae6a40"/><rect x="944" y="520" fill="#b3653d"/><rect x="952" y="520" fill="#b86039"/><rect x="960" y="520" fill="#be5b36"/><rect x="968" y="520" fill="#c35632"/><rect x="976" y="520" fill="#c9502e"/><rect x="984" y="520" fill="#ce4c2b"/><rect x="712" y="528" fill="#5fb475"/><rect x="720" y="528" fill="#64af71"/><rect x="728" y="528" fill="#67ac6f"/><rect x="736" y="528" fill="#67ac70"/><rect x="744" y="528" fill="#66ad70"/><rect x="752" y="528" fill="#67ac70"/><rect x="760" y="528" fill="#68ab6f"/><rect x="768" y="528" fill="#69aa6e"/><rect x="776" y="528" fill="#6aa96d"/><rect x="784" y="528" fill="#6ba86c"/><rect x="792" y="528" fill="#6ea66b"/><rect x="800" y="528" fill="#6ea56a"/><rect x="808" y="528" fill="#6ea66b"/><rect x="816" y="528" fill="#6ea56b"/><rect x="824" y="528" fill="#6fa46a"/><rect x="832" y="528" fill="#71a269"/><rect x="840" y="528" fill="#74a067"/><rect x="848" y="528" fill="#779d65"/><rect x="856" y="528" fill="#7a9a63"/><rect x="864" y="528" fill="#7e9760"/><rect x="872" y="528" fill="#82935d"/><rect x="880" y="528" fill="#868f5a"/><rect x="888" y="528" fill="#8b8a57"/><rect x="896" y="528" fill="#908654"/><rect x="904" y="528" fill="#958151"/><rect x="912" y="528" fill="#9a7c4d"/><rect x="920" y="528" fill="#a07649"/><rect x="928" y="528" fill="#a67146"/><rect x="936" y="528" fill="#ab6c42"/><rect x="944" y="528" fill="#b1673e"/><rect x="952" y="528" fill="#b7613a"/><rect x="960" y="528" fill="#bd5b36"/><rect x="968" y="528" fill="#c55431"/><rect x="976" y="528" fill="#ce4c2b"/><rect x="984" y="528" fill="#d64425"/><rect x="992" y="528" fill="#d44627"/><rect x="720" y="536" fill="#67ac6f"/><rect x="728" y="536" fill="#6fa46a"/><rect x="736" y="536" fill="#69aa6e"/><rect x="744" y="536" fill="#67ab6f"/><rect x="752" y="536" fill="#68ab6f"/><rect x="760" y="536" fill="#69aa6e"/><rect x="768" y="536" fill="#6aa96e"/><rect x="776" y="536" fill="#6aa96d"/><rect x="784" y="536" fill="#6ba86c"/><rect x="792" y="536" fill="#6ca76c"/><rect x="800" y="536" fill="#6ca76c"/><rect x="808" y="536" fill="#6ca76c"/><rect x="816" y="536" fill="#6da76c"/><rect x="824" y="536" fill="#6ea66b"/><rect x="832" y="536" fill="#6fa46a"/><rect x="840" y="536" fill="#72a268"/><rect x="848" y="536" fill="#759f66"/><rect x="856" y="536" fill="#779d64"/><rect x="864" y="536" fill="#7b9962"/><rect x="872" y="536" fill="#7f965f"/><rect x="880" y="536" fill="#83925d"/><rect x="888" y="536" fill="#878e5a"/><rect x="896" y="536" fill="#8c8a57"/><rect x="904" y="536" fill="#918554"/><rect x="912" y="536" fill="#968050"/><rect x="920" y="536" fill="#9c7b4c"/><rect x="928" y="536" fill="#a27548"/><rect x="936" y="536" fill="#a86f44"/><rect x="944" y="536" fill="#ae6940"/><rect x="952" y="536" fill="#b5633b"/><rect x="960" y="536" fill="#bc5c37"/><rect x="968" y="536" fill="#c55531"/><rect x="976" y="536" fill="#cf4b2a"/><rect x="984" y="536" fill="#d94123"/><rect x="992" y="536" fill="#d84324"/><rect x="1000" y="536" fill="#d84224"/><rect x="728" y="544" fill="#67ac6f"/><rect x="736" y="544" fill="#67ac6f"/><rect x="744" y="544" fill="#67ab6f"/><rect x="752" y="544" fill="#69aa6e"/><rect x="760" y="544" fill="#6aa96d"/><rect x="768" y="544" fill="#6ba86d"/><rect x="776" y="544" fill="#6ba86d"/><rect x="784" y="544" fill="#6ba86c"/><rect x="792" y="544" fill="#6ba86d"/><rect x="800" y="544" fill="#6ba86d"/><rect x="808" y="544" fill="#6aa96d"/><rect x="816" y="544" fill="#6ba96d"/><rect x="824" y="544" fill="#6ba86c"/><rect x="832" y="544" fill="#6da76c"/><rect x="840" y="544" fill="#6fa56a"/><rect x="848" y="544" fill="#72a268"/><rect x="856" y="544" fill="#759f66"/><rect x="864" y="544" fill="#789c64"/><rect x="872" y="544" fill="#7c9861"/><rect x="880" y="544" fill="#7f955f"/><rect x="888" y="544" fill="#83925d"/><rect x="896" y="544" fill="#878e5a"/><rect x="904" y="544" fill="#8c8957"/><rect x="912" y="544" fill="#918553"/><rect x="920" y="544" fill="#977f4f"/><rect x="928" y="544" fill="#9e794b"/><rect x="936" y="544" fill="#a67146"/><rect x="944" y="544" fill="#ac6c41"/><rect x="952" y="544" fill="#b3653d"/><rect x="960" y="544" fill="#ba5e38"/><rect x="968" y="544" fill="#c35632"/><rect x="976" y="544" fill="#cd4d2b"/><rect x="984" y="544" fill="#d94123"/><rect x="992" y="544" fill="#da4123"/><rect x="1000" y="544" fill="#db4022"/><rect x="1008" y="544" fill="#dd3e21"/><rect x="728" y="552" fill="#63b072"/><rect x="736" y="552" fill="#65ae71"/><rect x="744" y="552" fill="#66ac70"/><rect x="752" y="552" fill="#69aa6e"/><rect x="760" y="552" fill="#6ca76c"/><rect x="768" y="552" fill="#6ca76c"/><rect x="776" y="552" fill="#6ba86c"/><rect x="784" y="552" fill="#6ca76c"/><rect x="792" y="552" fill="#6ba96d"/><rect x="800" y="552" fill="#69aa6e"/><rect x="808" y="552" fill="#68ab6f"/><rect x="816" y="552" fill="#68ab6f"/><rect x="824" y="552" fill="#68ab6e"/><rect x="832" y="552" fill="#6aa96e"/><rect x="840" y="552" fill="#6ba86c"/><rect x="848" y="552" fill="#6ea56b"/><rect x="856" y="552" fill="#71a268"/><rect x="864" y="552" fill="#769e66"/><rect x="872" y="552" fill="#799b64"/><rect x="880" y="552" fill="#7c9962"/><rect x="888" y="552" fill="#7f965f"/><rect x="896" y="552" fill="#83925d"/><rect x="904" y="552" fill="#878e5a"/><rect x="912" y="552" fill="#8b8a57"/><rect x="920" y="552" fill="#918453"/><rect x="928" y="552" fill="#997d4e"/><rect x="936" y="552" fill="#a27548"/><rect x="944" y="552" fill="#a96e43"/><rect x="952" y="552" fill="#b0683f"/><rect x="960" y="552" fill="#b7613a"/><rect x="968" y="552" fill="#bf5934"/><rect x="976" y="552" fill="#c9502e"/><rect x="984" y="552" fill="#d64425"/><rect x="992" y="552" fill="#da4022"/><rect x="1000" y="552" fill="#dd3e21"/><rect x="1008" y="552" fill="#e13a1e"/><rect x="1016" y="552" fill="#e5371c"/><rect x="736" y="560" fill="#62b173"/><rect x="744" y="560" fill="#65ae71"/><rect x="752" y="560" fill="#69aa6e"/><rect x="760" y="560" fill="#73a067"/><rect x="768" y="560" fill="#6ea56b"/><rect x="776" y="560" fill="#6aa96d"/><rect x="784" y="560" fill="#6aa96d"/><rect x="792" y="560" fill="#68ab6f"/><rect x="800" y="560" fill="#66ad70"/><rect x="808" y="560" fill="#65ae71"/><rect x="816" y="560" fill="#64ae71"/><rect x="824" y="560" fill="#65ae71"/><rect x="832" y="560" fill="#66ad70"/><rect x="840" y="560" fill="#67ac6f"/><rect x="848" y="560" fill="#69aa6e"/><rect x="856" y="560" fill="#6ca76c"/><rect x="864" y="560" fill="#71a369"/><rect x="872" y="560" fill="#769e66"/><rect x="880" y="560" fill="#789c64"/><rect x="888" y="560" fill="#7a9a62"/><rect x="896" y="560" fill="#7d9760"/><rect x="904" y="560" fill="#81945e"/><rect x="912" y="560" fill="#85905b"/><rect x="920" y="560" fill="#8a8b58"/><rect x="928" y="560" fill="#928453"/><rect x="936" y="560" fill="#9c7b4c"/><rect x="944" y="560" fill="#a77145"/><rect x="952" y="560" fill="#ac6b41"/><rect x="960" y="560" fill="#b3653d"/><rect x="968" y="560" fill="#ba5e38"/><rect x="976" y="560" fill="#c45532"/><rect x="984" y="560" fill="#d04a2a"/><rect x="992" y="560" fill="#da4123"/><rect x="1000" y="560" fill="#de3d20"/><rect x="1008" y="560" fill="#e5361b"/><rect x="1016" y="560" fill="#ec3017"/><rect x="1024" y="560" fill="#ef2d15"/><rect x="744" y="568" fill="#62b173"/><rect x="752" y="568" fill="#65ad70"/><rect x="760" y="568" fill="#6aa96d"/><rect x="768" y="568" fill="#69aa6e"/><rect x="776" y="568" fill="#66ad70"/><rect x="784" y="568" fill="#64ae71"/><rect x="792" y="568" fill="#63b072"/><rect x="800" y="568" fill="#62b173"/><rect x="808" y="568" fill="#61b273"/><rect x="816" y="568" fill="#61b274"/><rect x="824" y="568" fill="#61b273"/><rect x="832" y="568" fill="#62b173"/><rect x="840" y="568" fill="#63b072"/><rect x="848" y="568" fill="#64ae71"/><rect x="856" y="568" fill="#66ad70"/><rect x="864" y="568" fill="#69aa6e"/><rect x="872" y="568" fill="#6da76c"/><rect x="880" y="568" fill="#72a268"/><rect x="888" y="568" fill="#769e66"/><rect x="896" y="568" fill="#789c64"/><rect x="904" y="568" fill="#7a9a62"/><rect x="912" y="568" fill="#7d9760"/><rect x="920" y="568" fill="#81935e"/><rect x="928" y="568" fill="#888d59"/><rect x="936" y="568" fill="#918453"/><rect x="944" y="568" fill="#a17649"/><rect x="952" y="568" fill="#a86f44"/><rect x="960" y="568" fill="#ad6a41"/><rect x="968" y="568" fill="#b3653c"/><rect x="976" y="568" fill="#bb5d37"/><rect x="984" y="568" fill="#c65330"/><rect x="992" y="568" fill="#d44626"/><rect x="1000" y="568" fill="#dd3e21"/><rect x="1008" y="568" fill="#e83419"/><rect x="1016" y="568" fill="#f9230e"/><rect x="1024" y="568" fill="#f7250f"/><rect x="1032" y="568" fill="#ff1e0a"/><rect x="752" y="576" fill="#60b374"/><rect x="760" y="576" fill="#61b173"/><rect x="768" y="576" fill="#61b173"/><rect x="776" y="576" fill="#60b374"/><rect x="784" y="576" fill="#5eb475"/><rect x="792" y="576" fill="#5db576"/><rect x="800" y="576" fill="#5db576"/><rect x="808" y="576" fill="#5cb676"/><rect x="816" y="576" fill="#5cb676"/><rect x="824" y="576" fill="#5cb676"/><rect x="832" y="576" fill="#5db576"/><rect x="840" y="576" fill="#5eb576"/><rect x="848" y="576" fill="#5fb475"/><rect x="856" y="576" fill="#60b374"/><rect x="864" y="576" fill="#61b173"/><rect x="872" y="576" fill="#63b072"/><rect x="880" y="576" fill="#64ae71"/><rect x="888" y="576" fill="#66ad70"/><rect x="896" y="576" fill="#6aa96e"/><rect x="904" y="576" fill="#6fa46a"/><rect x="912" y="576" fill="#769e66"/><rect x="920" y="576" fill="#769e66"/><rect x="928" y="576" fill="#7b9962"/><rect x="936" y="576" fill="#83925d"/><rect x="944" y="576" fill="#8e8856"/><rect x="952" y="576" fill="#9f784a"/><rect x="960" y="576" fill="#a77044"/><rect x="968" y="576" fill="#ab6d42"/><rect x="976" y="576" fill="#b0673e"/><rect x="984" y="576" fill="#ba5f38"/><rect x="992" y="576" fill="#c7522f"/><rect x="1000" y="576" fill="#d94123"/><rect x="1008" y="576" fill="#e2391d"/><rect x="1016" y="576" fill="#eb3117"/><rect x="1024" y="576" fill="#ec3017"/><rect x="1032" y="576" fill="#ed2f16"/><rect x="760" y="584" fill="#5bb777"/><rect x="768" y="584" fill="#5ab878"/><rect x="776" y="584" fill="#59b979"/><rect x="784" y="584" fill="#58ba79"/><rect x="792" y="584" fill="#58ba79"/><rect x="800" y="584" fill="#58ba79"/><rect x="808" y="584" fill="#58ba79"/><rect x="816" y="584" fill="#58ba7a"/><rect x="824" y="584" fill="#58ba79"/><rect x="832" y="584" fill="#58ba79"/><rect x="840" y="584" fill="#59b979"/><rect x="848" y="584" fill="#59b979"/><rect x="856" y="584" fill="#59b979"/><rect x="864" y="584" fill="#59b979"/><rect x="872" y="584" fill="#59b979"/><rect x="880" y="584" fill="#58ba79"/><rect x="888" y="584" fill="#53be7c"/><rect x="896" y="584" fill="#51c07e"/><rect x="904" y="584" fill="#53bf7d"/><rect x="912" y="584" fill="#5bb778"/><rect x="920" y="584" fill="#62b173"/><rect x="928" y="584" fill="#69aa6e"/><rect x="936" y="584" fill="#71a268"/><rect x="944" y="584" fill="#769e66"/><rect x="952" y="584" fill="#7e9660"/><rect x="960" y="584" fill="#898c59"/><rect x="968" y="584" fill="#8f8755"/><rect x="976" y="584" fill="#9b7c4d"/><rect x="984" y="584" fill="#a96e43"/><rect x="992" y="584" fill="#b7623a"/><rect x="1000" y="584" fill="#ca502e"/><rect x="1008" y="584" fill="#d94123"/><rect x="1016" y="584" fill="#d74425"/><rect x="1024" y="584" fill="#d74425"/><rect x="768" y="592" fill="#54bd7c"/><rect x="776" y="592" fill="#52bf7d"/><rect x="784" y="592" fill="#52c07e"/><rect x="792" y="592" fill="#53bf7d"/><rect x="800" y="592" fill="#53be7d"/><rect x="808" y="592" fill="#53be7d"/><rect x="816" y="592" fill="#53be7d"/><rect x="824" y="592" fill="#53bf7d"/><rect x="832" y="592" fill="#53be7c"/><rect x="840" y="592" fill="#54be7c"/><rect x="848" y="592" fill="#55bd7c"/><rect x="856" y="592" fill="#52bf7d"/><rect x="864" y="592" fill="#51c07e"/><rect x="872" y="592" fill="#51c17e"/><rect x="880" y="592" fill="#4ec380"/><rect x="888" y="592" fill="#4bc682"/><rect x="896" y="592" fill="#48c984"/><rect x="904" y="592" fill="#47c984"/><rect x="912" y="592" fill="#49c883"/><rect x="920" y="592" fill="#4bc682"/><rect x="928" y="592" fill="#53bf7d"/><rect x="936" y="592" fill="#58ba79"/><rect x="944" y="592" fill="#5eb475"/><rect x="952" y="592" fill="#63b072"/><rect x="960" y="592" fill="#68ab6e"/><rect x="968" y="592" fill="#6ba86c"/><rect x="976" y="592" fill="#6fa46a"/><rect x="984" y="592" fill="#80945f"/><rect x="992" y="592" fill="#a67146"/><rect x="1000" y="592" fill="#af6940"/><rect x="1008" y="592" fill="#c05934"/><rect x="776" y="600" fill="#4bc682"/><rect x="784" y="600" fill="#4bc682"/><rect x="792" y="600" fill="#4ec380"/><rect x="800" y="600" fill="#4fc27f"/><rect x="808" y="600" fill="#4fc27f"/><rect x="816" y="600" fill="#4ec380"/><rect x="824" y="600" fill="#4ec380"/><rect x="832" y="600" fill="#4ec380"/><rect x="840" y="600" fill="#4fc380"/><rect x="848" y="600" fill="#4ec380"/><rect x="856" y="600" fill="#4cc581"/><rect x="864" y="600" fill="#4bc682"/><rect x="872" y="600" fill="#4bc682"/><rect x="880" y="600" fill="#47ca85"/><rect x="888" y="600" fill="#44cc87"/><rect x="896" y="600" fill="#42ce88"/><rect x="904" y="600" fill="#41cf89"/><rect x="912" y="600" fill="#42cf88"/><rect x="920" y="600" fill="#43ce87"/><rect x="928" y="600" fill="#45cc86"/><rect x="936" y="600" fill="#46cb86"/><rect x="944" y="600" fill="#48c984"/><rect x="952" y="600" fill="#4bc682"/><rect x="960" y="600" fill="#50c17e"/><rect x="968" y="600" fill="#57bb7a"/><rect x="976" y="600" fill="#5eb475"/><rect x="984" y="600" fill="#6ca76c"/><rect x="992" y="600" fill="#7d9761"/><rect x="1000" y="600" fill="#948252"/><rect x="776" y="608" fill="#4ac783"/><rect x="784" y="608" fill="#4ac783"/><rect x="792" y="608" fill="#4bc682"/><rect x="800" y="608" fill="#4bc682"/><rect x="808" y="608" fill="#4bc682"/><rect x="816" y="608" fill="#4bc682"/><rect x="824" y="608" fill="#44cd87"/><rect x="832" y="608" fill="#45cb86"/><rect x="840" y="608" fill="#4bc682"/><rect x="848" y="608" fill="#4bc682"/><rect x="856" y="608" fill="#46ca85"/><rect x="864" y="608" fill="#42ce88"/><rect x="872" y="608" fill="#40d089"/><rect x="880" y="608" fill="#3ed28a"/><rect x="888" y="608" fill="#3dd38c"/><rect x="896" y="608" fill="#3bd58d"/><rect x="904" y="608" fill="#3ad68d"/><rect x="912" y="608" fill="#3ad68d"/><rect x="920" y="608" fill="#3ad68d"/><rect x="928" y="608" fill="#3ad68d"/><rect x="936" y="608" fill="#3ad68d"/><rect x="944" y="608" fill="#3bd58d"/><rect x="952" y="608" fill="#3cd48c"/><rect x="960" y="608" fill="#3fd18a"/><rect x="968" y="608" fill="#44cc87"/><rect x="976" y="608" fill="#4bc682"/><rect x="984" y="608" fill="#58ba7a"/><rect x="992" y="608" fill="#6da66b"/><rect x="784" y="616" fill="#44cc86"/><rect x="792" y="616" fill="#40d089"/><rect x="800" y="616" fill="#38d78e"/><rect x="808" y="616" fill="#31df94"/><rect x="816" y="616" fill="#2ee195"/><rect x="824" y="616" fill="#27e79a"/><rect x="832" y="616" fill="#32de93"/><rect x="840" y="616" fill="#38d88f"/><rect x="848" y="616" fill="#3ad68d"/><rect x="856" y="616" fill="#39d78e"/><rect x="864" y="616" fill="#38d88f"/><rect x="872" y="616" fill="#37d98f"/><rect x="880" y="616" fill="#36d990"/><rect x="888" y="616" fill="#35da90"/><rect x="896" y="616" fill="#34db91"/><rect x="904" y="616" fill="#33dd92"/><rect x="912" y="616" fill="#32dd93"/><rect x="920" y="616" fill="#32de93"/><rect x="928" y="616" fill="#31df94"/><rect x="936" y="616" fill="#2fe094"/><rect x="944" y="616" fill="#2ee195"/><rect x="952" y="616" fill="#2ee196"/><rect x="960" y="616" fill="#2ce396"/><rect x="968" y="616" fill="#2de296"/><rect x="976" y="616" fill="#38d88f"/><rect x="984" y="616" fill="#4ec380"/><rect x="792" y="624" fill="#37d990"/><rect x="800" y="624" fill="#27e79a"/><rect x="808" y="624" fill="#27e79a"/><rect x="816" y="624" fill="#27e79a"/><rect x="824" y="624" fill="#27e79a"/><rect x="832" y="624" fill="#27e79a"/><rect x="840" y="624" fill="#2ce397"/><rect x="848" y="624" fill="#2ee195"/><rect x="856" y="624" fill="#2ee196"/><rect x="864" y="624" fill="#2de296"/><rect x="872" y="624" fill="#2ee195"/><rect x="880" y="624" fill="#2fe095"/><rect x="888" y="624" fill="#2fe095"/><rect x="896" y="624" fill="#2ee196"/><rect x="904" y="624" fill="#2ae498"/><rect x="912" y="624" fill="#2be497"/><rect x="920" y="624" fill="#2be497"/><rect x="928" y="624" fill="#27e79a"/><rect x="936" y="624" fill="#27e79a"/><rect x="944" y="624" fill="#27e89a"/><rect x="952" y="624" fill="#27e79a"/><rect x="960" y="624" fill="#2ae598"/><rect x="968" y="624" fill="#2ee195"/><rect x="976" y="624" fill="#39d78e"/><rect x="800" y="632" fill="#2de296"/><rect x="808" y="632" fill="#27e79a"/><rect x="816" y="632" fill="#27e79a"/><rect x="824" y="632" fill="#27e89a"/><rect x="832" y="632" fill="#26e89a"/><rect x="840" y="632" fill="#24eb9c"/><rect x="848" y="632" fill="#27e79a"/><rect x="856" y="632" fill="#27e79a"/><rect x="864" y="632" fill="#27e79a"/><rect x="872" y="632" fill="#27e79a"/><rect x="880" y="632" fill="#29e699"/><rect x="888" y="632" fill="#2ae498"/><rect x="896" y="632" fill="#2ae598"/><rect x="904" y="632" fill="#25ea9c"/><rect x="912" y="632" fill="#27e89a"/><rect x="920" y="632" fill="#27e79a"/><rect x="928" y="632" fill="#27e89a"/><rect x="936" y="632" fill="#26e99b"/><rect x="944" y="632" fill="#22ec9d"/><rect x="952" y="632" fill="#26e99b"/><rect x="960" y="632" fill="#2de296"/><rect x="808" y="640" fill="#30df94"/><rect x="816" y="640" fill="#2be497"/><rect x="824" y="640" fill="#27e79a"/><rect x="832" y="640" fill="#27e79a"/><rect x="840" y="640" fill="#23eb9d"/><rect x="848" y="640" fill="#25ea9c"/><rect x="856" y="640" fill="#27e89a"/><rect x="864" y="640" fill="#27e79a"/><rect x="872" y="640" fill="#27e79a"/><rect x="880" y="640" fill="#25ea9b"/><rect x="888" y="640" fill="#27e79a"/><rect x="896" y="640" fill="#2ae498"/><rect x="904" y="640" fill="#2ae598"/><rect x="912" y="640" fill="#29e699"/><rect x="920" y="640" fill="#27e79a"/><rect x="928" y="640" fill="#28e79a"/><rect x="936" y="640" fill="#27e89a"/><rect x="944" y="640" fill="#23eb9d"/><rect x="952" y="640" fill="#28e699"/><rect x="816" y="648" fill="#3ad68d"/><rect x="824" y="648" fill="#39d68e"/><rect x="832" y="648" fill="#34dc91"/><rect x="840" y="648" fill="#2fe095"/><rect x="848" y="648" fill="#2ae498"/><rect x="856" y="648" fill="#27e79a"/><rect x="864" y="648" fill="#27e79a"/><rect x="872" y="648" fill="#28e699"/><rect x="880" y="648" fill="#20ee9f"/><rect x="888" y="648" fill="#29e699"/><rect x="896" y="648" fill="#30e094"/><rect x="904" y="648" fill="#2fe094"/><rect x="912" y="648" fill="#2ce397"/><rect x="920" y="648" fill="#28e79a"/><rect x="928" y="648" fill="#29e598"/><rect x="936" y="648" fill="#2be497"/><rect x="944" y="648" fill="#2ce397"/><rect x="816" y="656" fill="#47ca85"/><rect x="824" y="656" fill="#4bc682"/><rect x="832" y="656" fill="#45cc86"/><rect x="840" y="656" fill="#40d18a"/><rect x="848" y="656" fill="#3ad68d"/><rect x="856" y="656" fill="#35da90"/><rect x="864" y="656" fill="#33dd92"/><rect x="872" y="656" fill="#35da91"/><rect x="880" y="656" fill="#38d88f"/><rect x="888" y="656" fill="#3bd58d"/><rect x="896" y="656" fill="#3bd58d"/><rect x="904" y="656" fill="#38d88f"/><rect x="912" y="656" fill="#32dd93"/><rect x="920" y="656" fill="#27e79a"/><rect x="928" y="656" fill="#2ce397"/><rect x="936" y="656" fill="#30df94"/><rect x="824" y="664" fill="#55bd7b"/><rect x="832" y="664" fill="#5ab878"/><rect x="840" y="664" fill="#58ba79"/><rect x="848" y="664" fill="#4bc682"/><rect x="856" y="664" fill="#44cc86"/><rect x="864" y="664" fill="#43cd87"/><rect x="872" y="664" fill="#47ca85"/><rect x="880" y="664" fill="#4bc682"/><rect x="888" y="664" fill="#4ec380"/><rect x="896" y="664" fill="#4bc682"/><rect x="904" y="664" fill="#45cc86"/><rect x="912" y="664" fill="#3dd38b"/><rect x="920" y="664" fill="#35da90"/><rect x="832" y="672" fill="#6ca76c"/><rect x="840" y="672" fill="#769e66"/><rect x="848" y="672" fill="#769e66"/><rect x="856" y="672" fill="#68ab6f"/><rect x="864" y="672" fill="#60b274"/><rect x="872" y="672" fill="#5fb475"/><rect x="880" y="672" fill="#62b173"/><rect x="888" y="672" fill="#61b173"/><rect x="896" y="672" fill="#5cb677"/><rect x="904" y="672" fill="#53bf7d"/><rect x="912" y="672" fill="#4ac783"/><rect x="840" y="680" fill="#7a9a63"/><rect x="848" y="680" fill="#84915c"/><rect x="856" y="680" fill="#888d59"/><rect x="864" y="680" fill="#7f955f"/><rect x="872" y="680" fill="#7c9861"/><rect x="880" y="680" fill="#7b9962"/><rect x="888" y="680" fill="#789c64"/><rect x="896" y="680" fill="#769e66"/><rect x="904" y="680" fill="#61b273"/><rect x="848" y="688" fill="#8f8755"/><rect x="856" y="688" fill="#9c7b4c"/><rect x="864" y="688" fill="#938352"/><rect x="872" y="688" fill="#938352"/><rect x="880" y="688" fill="#9c7b4c"/><rect x="888" y="688" fill="#81945e"/><rect x="896" y="688" fill="#749f66"/><rect x="856" y="696" fill="#9a7c4d"/><rect x="864" y="696" fill="#a47347"/><rect x="872" y="696" fill="#9b7b4c"/><rect x="880" y="696" fill="#938252"/><rect x="888" y="696" fill="#84915c"/><rect x="864" y="704" fill="#a47347"/><rect x="872" y="704" fill="#9a7d4e"/><rect x="864" y="712" fill="#987e4f"/></g>
<ellipse cx="809" cy="349" rx="8" ry="6.5" fill="#3ae8a8" fill-opacity=".8"/><ellipse cx="809" cy="349" rx="4" ry="3.2" fill="#28c8a8"/><circle cx="809" cy="349" r="1.6" fill="#1e9a9a"/><ellipse cx="842.5" cy="638" rx="4" ry="2" fill="#28c8a0" fill-opacity=".6" stroke="#3a9aa8" stroke-width=".8"/><circle cx="701.4" cy="218.5" r="7" fill="#4a3ac8" fill-opacity=".7"/><circle cx="701.4" cy="218" r="4.5" fill="#5a28d0"/>
<g fill="none" stroke="#d8dcd4" stroke-opacity=".8" stroke-width=".9" stroke-linejoin="round"><polyline points="695.5,226.5 697.3,225.5 699.0,224.4 700.5,224.1 702.0,223.8 703.5,224.1 705.0,224.5 707.5,223.5"/><polyline points="693.0,230.5 694.6,229.7 696.2,228.8 697.9,228.3 699.7,228.3 701.3,228.1 703.0,227.8 704.9,227.3 707.0,226.8 708.5,226.7 710.0,226.5"/><polyline points="645.0,303.0 643.7,304.0 643.0,305.5 642.1,306.8 641.1,308.1 640.2,309.4 639.3,310.8 638.3,312.0 637.0,313.0 635.7,314.0 634.8,315.3 634.3,317.0 633.3,318.2 632.8,319.5 632.7,321.1 632.1,322.5 631.1,323.8 630.3,325.1 630.0,326.6 629.9,328.1 629.6,329.6 628.9,331.0 628.2,332.4 628.1,334.0 627.8,335.5 627.3,337.0 626.9,338.5 626.7,340.1 626.4,341.6 625.9,343.1 625.2,344.5 624.5,345.9 624.1,347.4 623.8,348.9 623.2,350.5 622.6,352.0 621.9,353.6 621.6,355.2 620.9,356.8 620.5,358.4 619.8,359.8 619.5,361.3 618.8,362.7 617.7,363.9 616.8,365.1 615.6,366.2 614.5,367.4 614.3,369.0 613.8,370.4 612.7,371.6 611.9,372.9 611.3,374.3 610.0,375.3 608.7,376.2 607.5,377.3 606.6,378.7 605.3,379.6 604.1,380.7 602.9,381.8 601.7,382.8 600.4,383.7 599.0,384.6 597.8,385.6 596.7,386.8"/><polyline points="692.0,232.0 691.8,233.8 691.3,235.3 690.6,236.7 688.9,237.6 687.4,238.5 686.8,240.0 686.4,241.6 685.4,242.8 684.1,243.9 683.2,245.2 682.5,246.7 681.7,248.0 681.2,249.7 680.5,251.4 680.1,253.2 680.0,255.0 679.0,256.3 677.9,257.3 676.6,258.3 675.5,259.4 674.6,260.7 673.5,261.8 672.4,262.9 671.2,264.0 669.6,264.7 668.4,266.3 667.6,268.2 666.5,270.0 668.1,271.1 669.7,272.0 670.7,273.5 671.7,275.0 672.2,276.6 672.8,278.3 673.2,280.0 673.2,281.7 672.5,283.2 672.1,284.9 671.6,286.5 671.1,288.1 670.9,289.8 670.9,291.5 670.3,293.1 672.1,295.6 668.1,295.4 667.6,296.9 667.1,298.3 666.7,299.7 666.1,301.2 665.6,302.6 665.0,303.9 664.1,305.2 663.1,306.4 662.6,307.9 662.1,309.4 662.1,311.2 661.3,312.7 660.3,314.1 659.7,315.6 659.5,317.3 659.2,319.0 658.7,320.6 657.9,322.0 656.9,323.3 656.3,324.7 655.6,326.1 654.8,327.4 654.1,328.9 653.6,330.3 652.8,331.7 651.7,332.9 650.8,334.1 650.1,335.5 649.0,336.7 648.1,337.9 647.7,339.5 647.1,341.0 646.2,342.2 645.5,343.6 644.8,345.0 643.6,346.1 642.5,347.3 642.2,348.9 641.8,350.4 641.0,351.8 640.2,353.1 640.1,354.6 639.6,356.1 638.9,357.6 640.5,359.6 637.9,360.6 637.3,362.1 637.3,363.7 636.8,365.2 636.3,366.7 636.5,368.4 636.7,370.0 636.4,371.6 635.6,373.0 634.1,373.7 633.3,375.0 632.7,376.5 631.8,377.8 630.6,378.7 629.5,379.7 628.4,380.8 627.3,381.9 626.3,383.0 625.4,384.2 624.3,385.3 623.2,386.4 622.2,387.4 620.9,388.3 619.7,389.2 618.8,390.5 618.3,392.1 617.4,393.4 616.4,394.5 615.6,395.8 614.5,396.8 612.9,397.4 611.7,398.4 611.1,399.9 610.4,401.3 608.9,402.0"/><polyline points="713.3,230.5 712.4,232.0 711.9,233.6 711.5,235.2 710.8,236.7 709.7,238.1 708.9,239.6 708.7,241.3 708.3,243.0 707.4,244.3 706.5,245.7 705.8,247.1 705.2,248.6 704.8,250.2 704.2,251.7 702.9,252.7 701.8,253.7 700.5,254.8 699.6,256.3 698.3,257.4 696.8,258.1 697.1,259.8 697.1,261.5 696.5,263.2 696.3,264.9 695.7,266.2 694.9,267.5 694.0,268.6 693.1,270.0 694.3,271.1 695.7,271.8 697.0,272.9 696.7,274.5 696.4,276.0 696.1,277.5 696.0,279.0 696.1,280.5 695.8,282.0 695.5,283.5 695.2,285.0 695.3,286.5 695.0,288.0 693.9,289.4 693.0,290.8 692.7,292.4 692.8,294.1 692.4,295.6 691.8,297.1 691.8,298.8 691.6,300.4 691.0,301.9 690.4,303.4 690.4,305.2 690.0,306.8 689.0,308.2 687.9,309.4 687.2,310.8 686.4,312.3 685.4,313.6 684.6,315.0 684.0,316.5 683.3,318.0 682.9,319.5 682.3,320.9 682.9,322.9 680.5,323.4 680.0,324.8 679.6,326.3 678.9,327.7 678.0,329.0 677.4,330.4 677.2,332.0 676.4,333.3 674.9,334.3 673.5,335.2 672.8,336.6 672.3,338.2 671.3,339.3 670.3,340.5 669.9,342.1 669.2,343.5 668.0,344.6 667.2,345.9 666.5,347.4 665.6,348.7 664.4,349.7 663.4,350.9 662.9,352.5 662.5,354.1 662.1,355.7 660.2,356.3 659.9,358.0 659.4,359.4 659.0,360.9 659.1,362.4 659.0,364.0 659.8,365.7 658.0,366.8 657.7,368.3 657.3,369.7 657.1,371.3 656.2,372.6 655.8,374.0 655.1,375.4 654.5,376.8 654.0,378.2 654.3,379.9 654.7,381.5 655.3,383.2 653.8,384.4 652.5,385.6 652.8,387.3 652.6,388.8 652.2,390.2 651.7,391.6 651.1,393.1 649.9,394.0 648.8,395.1 647.7,396.1 646.7,397.2 645.7,398.4 644.6,399.4 643.1,400.0 641.4,400.4 640.2,401.2 639.2,402.4 638.4,403.8 637.4,404.9 636.2,405.8 635.1,406.9 635.6,409.7 633.1,409.1 631.9,410.1 630.8,411.1 629.8,412.2 628.8,413.3 627.3,413.9 625.8,414.5 624.9,415.8 624.0,417.0"/><polyline points="731.0,250.0 729.9,251.2 728.9,252.4 728.1,253.8 727.7,255.4 726.7,256.6 728.9,260.1 724.8,259.2 724.1,260.6 723.2,261.9 722.0,263.0 721.6,264.5 720.6,266.0 720.8,267.6 721.4,269.3 721.4,270.8 720.8,272.3 720.3,273.9 720.4,275.5 720.2,277.0 719.5,278.5 719.2,280.1 719.4,281.7 719.6,283.3 719.5,284.9 719.3,286.5 718.9,288.0 718.2,289.5 717.8,291.1 717.2,292.6 716.5,294.1 716.5,295.7 716.8,297.3 716.2,298.8 717.0,300.6 716.2,302.0 716.0,303.6 715.6,305.0 715.0,306.4 716.6,308.4 714.6,309.5 714.3,310.9 712.8,312.1 712.8,313.7 712.3,315.1 711.8,316.5 711.4,318.0 711.4,319.6 711.1,321.0 710.7,322.5 710.1,323.9 709.5,325.3 711.1,327.3 709.0,328.3 708.4,329.7 707.6,331.0 707.3,332.5 706.9,333.9 705.4,334.8 704.7,336.1 704.5,337.9 703.5,339.0 702.1,339.9 701.5,341.3 700.5,342.5 700.4,344.3 699.7,345.6 698.9,346.9 697.9,348.1 696.9,349.3 696.2,350.7 695.6,352.1 694.9,353.4 693.9,354.6 693.1,355.9 692.0,357.0 690.9,358.2 690.2,359.6 689.5,361.1 688.8,362.5 688.2,364.0 687.5,365.4 686.7,366.8 685.9,368.2 685.2,369.6 684.2,370.9 683.5,372.3 683.1,373.8 682.4,375.2 681.5,376.5 680.7,377.8 679.8,379.1 678.9,380.4 678.6,382.0 678.3,383.6 677.5,384.9 676.6,386.2 675.3,387.3 674.0,388.3 673.5,389.8 673.2,391.4 672.2,392.6 670.9,393.7 670.2,395.1 669.6,396.5 668.4,397.6 667.3,398.8 666.8,400.3 666.5,401.8 665.6,403.1 664.7,404.3 664.1,405.7 663.3,407.0 662.3,408.1 661.4,409.3 660.4,410.4 659.0,411.3 657.9,412.3 657.4,413.8 656.7,415.2 655.7,416.3 654.5,417.3 653.6,418.5 653.0,419.9 652.4,421.4 651.6,422.7 652.7,425.4 649.2,424.6 648.3,425.8 647.6,427.2 646.6,428.3 645.5,429.3 644.6,430.5 643.8,431.8 643.1,433.2 642.4,434.6 641.2,435.5 640.0,436.5"/><polyline points="751.0,271.0 750.2,272.4 749.8,273.9 749.4,275.5 748.7,277.0 748.7,278.6 748.3,280.2 743.3,280.1 746.0,282.8 746.4,284.5 746.0,286.0 745.5,287.4 745.3,288.9 745.2,290.5 745.8,292.2 743.9,293.3 743.2,294.7 742.8,296.1 742.2,297.6 741.8,299.0 741.8,300.6 741.9,302.2 741.9,303.8 741.2,305.2 740.3,306.5 740.0,308.0 739.4,309.5 738.9,311.0 738.5,312.5 737.9,314.0 737.3,315.4 736.5,316.8 735.6,318.2 735.0,319.6 734.8,321.3 734.3,322.8 733.5,324.2 732.6,325.5 731.6,326.8 730.6,328.1 731.0,330.0 730.6,331.6 730.6,333.2 730.3,334.8 730.3,336.4 730.0,338.0 729.5,339.5 728.9,341.0 727.0,342.3 728.3,344.2 728.2,345.8 727.8,347.3 726.9,348.8 726.4,350.3 726.0,352.0 726.2,353.7 726.5,355.2 727.0,356.8 726.9,358.4 729.1,359.7 727.6,361.5 727.6,363.1 727.4,364.8 727.9,366.3 728.1,367.9 728.3,369.5 730.7,371.4 728.2,372.3 727.6,373.7 726.9,375.1 726.0,376.3 722.5,375.9 724.1,378.7 723.4,380.0 722.6,381.3 721.3,382.3 720.3,383.5 719.9,385.0 719.4,386.4 718.6,387.7 717.6,388.9 717.0,390.3 716.5,391.7 715.1,392.6 714.0,393.8 713.8,395.4 713.0,396.7 712.0,397.9 711.3,399.2 710.5,400.5 710.0,401.9 709.0,403.1 707.9,404.2 707.4,405.7 706.8,407.1 706.0,408.5 705.1,409.8 704.2,411.2 703.6,412.7 703.0,414.3 702.4,415.7 701.5,417.1 701.0,418.7 700.6,420.5 699.1,421.4 697.8,422.3 696.3,423.0 694.9,423.8 694.0,425.2 692.8,426.2 691.2,426.8 689.8,427.6 688.6,428.6 687.6,429.8 686.6,431.2 685.2,432.0 683.7,432.6 682.4,433.2 681.2,434.1 679.9,434.9 678.5,435.6 677.1,436.0 675.5,436.3 674.3,437.3 673.3,438.3 672.2,439.6 670.8,440.9 669.8,442.3 669.0,444.0 669.2,445.8 669.4,447.5 669.9,449.2 669.5,451.1 668.2,452.3 667.4,453.6 663.7,453.2 665.4,456.1 664.8,457.5 664.9,459.4 662.9,459.9 662.4,461.4 662.0,463.0"/><polyline points="777.8,300.0 778.0,301.6 777.7,303.2 776.9,304.8 776.9,306.4 777.5,308.0 777.6,309.6 777.8,311.2 778.2,312.8 778.1,314.6 776.8,315.9 775.7,317.1 773.8,317.3 772.2,317.8 771.4,319.2 771.2,320.6 770.1,321.9 769.6,323.4 769.3,324.9 769.2,326.4 769.5,328.0 769.4,329.5 769.3,331.0 769.3,332.5 767.9,333.7 768.2,335.5 767.3,336.9 767.0,338.6 766.9,340.3 766.3,341.8 765.8,343.4 765.6,345.1 765.0,346.6 764.3,348.1 764.2,349.6 764.1,351.2 765.6,352.9 762.3,354.2 762.0,355.7 758.5,357.0 762.4,358.9 761.7,360.5 762.0,362.1 762.5,363.7 762.2,365.3 761.7,366.8 761.4,368.4 761.1,370.0 761.2,371.6 761.7,373.1 762.1,374.7 761.9,376.2 761.4,377.8 761.7,379.3 761.9,380.9 761.2,382.4 761.4,384.0 762.3,385.6 762.8,387.1 762.7,388.7 762.3,390.2 762.1,391.8 762.4,393.3 762.5,394.9 763.8,396.4 762.3,398.1 761.0,399.3 760.4,400.8 760.7,402.7 760.1,404.2 759.0,405.5 758.3,407.0 758.0,408.6 757.5,410.3 756.3,411.5 754.9,412.4 753.9,413.6 753.0,415.0 751.9,416.2 751.3,417.8 750.5,419.2 749.0,420.0 748.7,421.6 748.8,423.2 748.2,424.9 748.4,426.5 749.4,428.1 749.3,429.8 748.1,431.4 748.1,432.8 748.7,434.5 748.7,436.2 748.0,437.6 747.4,439.0 747.0,440.5 746.2,441.8 745.8,443.3 744.9,444.9 743.0,445.2 741.6,446.2 740.1,446.9 738.4,447.3 737.0,448.1 735.8,449.3 734.6,450.4 733.0,451.0 732.0,452.4 732.1,453.9 732.7,455.5 732.2,457.0 731.4,458.4 730.8,459.8 730.1,461.2 730.2,462.8 731.0,464.4 729.7,465.6 728.3,466.5 726.6,466.8 724.6,466.7 722.9,467.0 721.9,468.8 721.9,471.0 720.6,471.9 719.3,472.8 718.6,474.3 717.6,475.5 716.2,476.3 715.0,477.2 714.2,478.6 713.2,479.8 712.0,480.8 711.2,482.1 710.6,483.7 709.8,485.1 708.4,486.1 707.2,487.1 706.5,488.6 705.2,489.6 703.8,490.5 703.0,491.9 702.2,493.3 701.1,494.5 699.5,495.2 698.3,496.5 698.3,498.4 698.3,500.3 697.8,502.0 695.6,502.5"/><polyline points="838.9,365.8 837.4,366.6 835.8,365.8 834.3,365.0 832.8,365.4 831.3,365.8 829.7,365.9 828.2,365.9 826.9,366.0 826.3,367.4 825.1,368.7 823.6,369.8 822.5,371.2 821.7,372.7 820.5,373.8 819.2,374.8 817.8,375.6 817.7,377.2 817.7,378.7 818.4,380.1 819.2,381.5 819.2,383.0 818.7,384.6 819.3,386.1 818.0,387.8 817.5,388.9 818.6,390.2 818.8,391.8 818.4,393.3 817.4,394.6 817.3,396.1 817.5,397.7 815.4,399.0 818.4,401.0 818.0,402.5 817.0,403.9 816.5,405.4 816.8,407.0 817.3,408.6 817.4,410.2 816.7,411.6 816.2,413.1 815.0,414.5 813.6,416.0 813.0,417.5 813.7,419.3 813.4,420.9 815.7,422.8 816.1,424.5 815.6,426.1 813.5,427.4 812.7,428.9 812.4,430.4 812.4,431.9 812.2,433.4 811.7,434.9 811.6,436.4 812.3,437.9 813.5,438.8 814.3,440.1 813.8,442.2 814.3,443.7 815.8,444.5 817.3,445.3 818.1,446.6 818.7,448.0 819.6,449.2 820.3,450.5 821.1,451.8 821.6,453.2 822.3,454.7 823.1,456.2 824.1,457.7 824.9,459.2 825.4,460.8 825.8,462.5 826.6,464.1 827.2,465.5 828.2,466.8 828.9,468.3 829.0,469.9 829.5,471.5 829.7,473.1 830.4,474.5 831.8,475.7 832.4,477.2 832.6,478.8 833.3,480.2 833.5,481.7 833.9,483.4 834.7,484.8 835.7,486.1 836.6,487.4 837.6,488.7 838.7,490.0 839.3,491.5 840.0,493.0 841.1,494.3 842.4,495.4 843.0,496.9 842.9,498.5 843.0,500.0 843.8,501.3 844.3,502.8 843.7,504.5 843.5,506.1 844.6,507.3 845.3,508.7 846.3,510.0 847.4,511.2 847.4,512.8 847.1,514.5 847.0,516.1 847.8,517.5 848.7,518.9 848.9,520.4 849.1,522.0 849.0,523.5 849.1,525.1 849.1,526.6 848.5,528.0 847.2,529.4 846.5,531.4 848.2,532.9 849.6,534.0 850.5,535.5 851.3,536.9 853.4,537.4 853.8,539.3 855.4,540.2 856.5,541.3 857.4,542.6 858.3,543.8 859.5,544.9 861.2,545.6 862.6,546.4 863.5,547.7 864.3,549.1 864.8,550.7 865.7,552.0 866.8,553.2 867.1,554.9 867.7,556.5 868.6,557.8 869.0,559.5 871.1,559.9 871.3,562.3 873.4,562.1 874.6,563.2 875.9,564.1 877.3,564.8 879.0,565.2 880.5,565.7 881.8,566.6 881.1,570.4 884.3,568.5 885.8,568.6 887.1,569.5 888.3,570.7 889.6,571.5 891.3,571.6 893.0,571.5 894.4,572.1 895.6,573.1 897.0,573.9 898.3,574.7 899.6,575.6 901.1,576.1 902.6,576.4 903.9,577.2 905.5,577.5 907.1,577.8 908.6,578.5 910.1,578.8 911.8,578.8 913.3,579.1 914.8,579.7 916.3,580.4 917.9,580.6 919.5,580.8 921.1,581.0 922.6,581.3 924.2,581.7 925.9,581.2 927.6,581.0 929.0,582.2 930.2,583.5 932.2,582.6 933.7,583.2 935.0,584.4 936.2,585.8 937.9,585.9 940.4,583.7 941.1,586.5 942.3,587.6 943.8,588.4 945.7,587.8 947.4,587.7 948.7,588.7 950.1,589.3 951.7,589.4 953.4,589.0 954.7,590.5 956.2,591.1 957.9,590.7 959.4,591.1 960.8,592.0 962.3,592.9 964.0,592.8 965.5,592.2 967.0,592.5 968.5,592.1 970.0,591.7 971.5,591.7 973.0,591.0 974.5,590.9 976.0,591.8 977.5,591.4 979.0,590.9 980.5,590.7 982.4,590.1 983.9,591.6 984.6,593.1 985.3,594.6 985.9,596.3 986.6,597.7 987.9,598.8 988.8,600.2 990.2,601.3 991.9,602.2 993.2,603.3 994.4,604.7 995.6,606.0"/><polyline points="891.0,422.0 890.9,423.6 891.3,425.2 891.6,426.7 891.9,428.3 892.7,429.7 894.0,431.0 894.4,432.6 895.6,433.9 894.7,435.7 895.0,437.3 895.1,438.9 895.6,440.4 895.6,442.0 894.8,443.4 894.5,445.1 892.8,445.9 891.1,446.8 891.0,448.6 890.5,450.2 887.7,450.4 888.2,452.8 889.3,454.6 889.7,456.2 889.5,457.8 889.5,459.4 889.6,461.0 889.9,462.6 890.4,464.2 890.8,465.8 891.3,467.3 891.5,468.9 891.7,470.4 892.0,472.0 892.6,473.4 892.4,475.1 893.3,476.5 894.2,477.9 894.2,479.5 894.7,481.0 895.1,482.5 895.4,484.1 896.7,485.1 898.1,486.0 899.4,486.8 900.3,488.3 901.5,489.4 903.4,489.5 904.5,490.7 905.5,492.0 907.2,492.5 908.0,494.0 908.2,495.8 910.1,496.3 909.9,498.5 911.0,499.6 912.4,500.5 913.3,501.8 914.0,503.2 914.9,504.5 915.8,505.6 916.8,506.9 917.2,508.4 917.5,509.9 918.5,511.1 920.1,512.1 920.8,513.5 921.1,515.0 922.6,516.0 922.9,517.6 923.6,519.0 924.0,520.5 924.1,522.2 924.8,523.6 925.5,524.9 926.1,526.3 926.8,527.7 927.2,529.2 928.4,530.2 930.1,530.8 932.0,531.4 933.4,532.2 933.6,533.9 933.4,535.8 934.2,537.1 935.4,538.1 935.7,539.7 936.4,541.2 937.8,542.4 939.1,543.6 939.4,545.2 939.4,547.0 939.8,548.6 940.8,550.0 941.6,551.4 941.7,553.1 941.8,555.0 942.3,556.7 942.6,558.5 943.3,560.3 944.8,561.4 946.5,562.4 946.9,564.0 946.7,566.0 947.3,567.6 948.6,568.7 949.6,570.0 950.3,571.5 951.0,573.0 952.4,573.7 953.4,575.1 954.1,576.7 955.6,577.4 957.5,577.6 959.0,578.2 959.9,579.6 960.5,581.3 961.8,582.5 963.5,582.5 965.1,582.7 966.7,582.7 968.2,583.2 969.6,584.4 971.0,585.4 972.5,585.8 974.3,585.3 975.9,585.4 977.3,586.2 979.0,586.0 980.7,585.7 982.7,585.3 983.4,587.7 984.7,588.7 986.1,589.6 987.3,590.7 988.6,591.6 990.2,592.0 991.8,592.4 993.2,593.1 994.4,594.3 995.7,595.2 997.2,595.8 998.7,596.3 1000.4,596.6 1002.1,596.8 1003.0,598.5"/><polyline points="986.0,531.0 987.1,532.4 986.9,534.0 985.9,535.6 986.7,537.1 987.6,538.6 987.3,540.1 987.2,541.7 987.5,543.2 987.8,544.7 988.0,546.2 988.0,547.8 988.4,549.3 989.1,550.8 989.6,552.3 989.5,554.0 989.5,555.7 990.1,557.2 990.9,558.7 991.2,560.3 991.5,562.0 992.2,563.4 993.0,564.8 993.5,566.3 994.6,567.4 996.2,568.1 997.3,569.3 997.8,570.8 998.7,572.1 1000.2,572.9 1001.8,573.6 1002.7,575.0 1002.6,576.9 1002.7,578.7 1003.9,579.8 1005.1,581.0 1005.7,582.5 1006.5,583.8 1007.2,585.3 1008.1,586.6 1009.4,587.7 1010.7,588.8 1011.8,589.9 1011.4,592.0"/><polyline points="780.0,602.2 781.7,602.5 783.4,602.4 785.1,602.6 786.7,603.1 788.4,603.4 790.6,603.4 790.5,605.7 789.8,607.6 791.1,609.0 792.3,610.5 792.1,612.3 792.1,614.5 794.1,614.3 795.6,614.1 797.2,613.9 798.8,614.3 800.4,615.1 801.9,614.2 803.4,613.1 805.0,613.1 806.6,613.5 808.1,613.7 809.7,613.7 811.2,613.0 812.8,612.5 814.4,612.8 815.9,612.8 817.5,612.2 819.0,611.8 820.6,611.8 822.2,612.1 823.5,612.0 824.1,610.8 825.4,609.8 826.4,608.6 827.4,606.8 829.5,607.6 831.0,608.8 832.6,609.6 834.2,609.0 835.7,609.0 837.3,609.4 838.8,610.1 840.3,610.8 841.9,610.7 843.5,610.6 845.0,611.1 846.5,612.7 848.8,611.9 850.5,612.6 852.1,612.6 853.4,610.8 855.2,611.3 856.8,610.8 858.4,610.3 859.9,609.8 860.2,608.4 861.1,607.0 861.8,605.6 862.1,604.0 862.5,602.4 864.1,602.8 865.7,603.2 867.2,604.1 868.7,604.9 870.3,605.1 872.0,605.3 873.7,604.8 874.8,603.4 876.6,603.3 878.9,604.6 879.6,602.2 881.0,601.2 882.2,600.1 883.9,599.8 885.8,600.0 887.3,599.5 888.4,598.0 889.8,597.3 891.1,596.4 892.0,595.2 893.2,594.2 893.6,592.7 894.0,591.1 895.3,590.6 896.7,590.7 898.3,591.3 900.0,590.4 901.7,590.6 903.4,590.6 905.0,589.8 906.8,589.3 908.1,590.6 909.2,592.2 910.5,593.3 912.0,593.7 913.7,593.4 915.5,593.3 917.1,593.5 918.6,594.0 920.0,594.5 921.7,594.6 923.2,594.9 924.4,596.1 925.5,597.7 926.6,599.1 928.3,599.2 930.0,599.0 932.0,598.2 932.8,600.8 934.6,599.7 936.1,599.6 937.5,600.9 939.0,601.0 940.6,600.4 942.1,600.4 943.4,601.7 944.9,601.9 946.5,601.6 948.1,601.2 949.6,601.3 951.0,602.1 953.1,600.8 954.0,602.6 955.5,603.1 956.8,604.1 958.2,604.7 959.5,605.5 960.9,606.2 962.2,607.1 963.6,607.9 965.2,608.1 966.9,607.9 968.7,607.7 970.6,606.6 971.4,609.5 972.7,610.7 974.1,611.5 975.6,611.9 977.4,611.6 979.0,611.7 980.5,612.3 982.1,612.5 983.8,612.4 985.3,612.9 986.7,613.6"/><polyline points="802.5,627.5 803.6,626.2 805.1,625.4 806.5,624.6 807.3,622.8 809.4,623.0 810.9,621.3 813.1,622.0 814.3,623.5 816.4,622.9 817.0,625.8 818.9,626.8 820.5,625.4 821.2,624.0 823.9,624.2 822.2,620.7 823.5,619.2 825.4,619.9 826.9,620.6 828.4,620.9 830.0,621.0 830.1,622.6 831.2,623.8 832.0,625.1 832.8,626.3 833.7,627.6 835.4,627.9 836.8,628.6 837.9,629.9 839.2,630.9 840.8,631.3 842.0,632.5 843.2,633.7 845.0,633.9 846.7,633.9 848.4,634.3 850.1,634.4 851.6,635.5 853.1,636.8 855.1,637.1 856.8,635.9 858.2,635.0 859.7,634.3 861.2,633.6 862.5,632.6 864.1,632.5 865.7,633.1 867.2,633.7 868.8,634.0 870.5,633.6 872.1,633.3 873.5,634.8 875.0,636.1 876.7,635.7 878.4,634.7 880.3,634.7 880.5,636.7 880.6,638.5 880.6,640.2 880.6,642.0 880.3,643.5 879.6,644.6 879.2,646.4 878.1,647.5 877.0,648.7 876.2,650.1 875.0,651.1 873.3,651.6 872.1,652.7 871.3,654.0 869.8,654.4 868.9,653.2 867.2,653.3 865.6,653.4 864.0,653.6 862.4,653.4 861.0,652.5 859.6,651.7 858.3,650.7 856.9,649.8 855.3,649.9 853.8,649.8 852.2,649.6 850.4,650.2 848.9,650.1 847.5,649.3 846.2,648.5 844.8,647.7 843.4,646.9 842.2,645.7 840.8,645.1 839.1,645.3 837.5,645.3 836.1,644.6 834.5,644.5 833.0,644.7 831.5,644.2 830.1,643.5 828.6,643.1 827.2,642.4 825.6,642.5 824.0,643.1 822.4,643.1 820.9,642.7 819.2,641.4 817.5,640.0 816.2,638.9 814.9,637.8 813.4,637.0 811.6,636.8 810.0,636.1 809.1,634.6 808.2,633.3 807.2,632.0 806.2,630.8 805.3,629.4 804.4,628.0 802.5,627.5"/><polyline points="978.0,622.0 976.5,622.0 975.0,621.7 973.5,622.5 972.0,623.1 970.5,623.2 969.1,623.8 967.6,624.1 966.1,624.1 964.6,623.9 963.0,623.4 961.5,622.9 959.9,622.6 958.4,622.5 956.9,622.7 955.5,623.2 954.0,623.6 952.5,623.6 951.0,624.2 949.5,624.5 947.8,624.1 946.3,624.5 944.9,625.2 943.3,625.5 941.9,626.2 940.6,627.4 939.2,628.0 937.7,628.4 936.1,628.6 934.5,628.6 932.7,628.5 931.5,629.7 930.6,631.3 929.5,632.4 928.3,633.5 926.7,634.2 925.1,634.8 924.2,636.1 924.9,637.6 924.3,639.1 923.3,640.6 922.9,642.1 923.0,643.7 923.4,645.3 923.2,646.8 923.0,648.3 922.6,649.8 922.1,651.3 922.1,652.9 922.3,654.5 922.4,655.9 923.8,656.8 924.7,658.3 925.1,660.1 926.3,661.4 927.0,663.0"/><polyline points="826.0,657.0 826.9,658.6 828.1,659.8 829.8,660.4 831.5,661.0 833.0,661.5 834.4,661.2 835.8,662.3 837.1,663.7 838.7,663.9 840.4,663.8 842.0,663.8 843.6,663.7 845.2,664.5 846.2,666.0 847.6,666.6 849.1,667.0 850.2,668.3 851.4,669.3 853.0,669.4 854.6,669.6 856.4,669.4 857.8,670.0 858.7,671.6 860.2,671.7 861.7,672.4 863.3,672.1 865.0,672.4 866.7,673.2 868.3,673.5 870.0,672.4 871.2,671.4 873.0,671.6 874.6,671.5 875.0,668.3 877.5,670.3 879.2,670.4 880.4,669.1 881.4,667.7 882.6,666.4 884.1,665.8 885.7,665.6 887.5,666.0 888.7,664.9 890.3,665.4 891.9,666.1 893.6,665.8 895.3,666.0 896.9,666.4 898.5,666.7 900.0,667.6 901.3,668.6 902.7,669.4 903.9,670.6 905.5,671.0 907.3,671.2 909.1,671.3 910.7,671.7 912.0,672.9 913.0,674.4"/><polyline points="838.0,672.0 839.8,671.1 840.9,672.8 842.2,673.9 843.7,674.2 845.4,673.9 846.7,674.8 848.3,674.5 849.7,675.3 851.3,675.3 852.8,675.3 854.5,674.9 855.7,676.3 856.9,677.6 858.4,677.9 860.1,677.5 861.0,679.9 862.9,678.6 864.3,679.3 865.9,679.4 867.4,679.4 869.0,679.3 870.4,680.1 871.5,681.7 873.0,682.2 874.6,681.5 876.1,681.6 877.6,682.3 879.1,682.1 880.6,682.1 882.2,682.6 883.7,683.0 885.2,683.4 886.7,683.2 888.3,682.6 889.8,682.5 891.3,682.4 892.9,682.0 894.4,682.4 895.9,682.9 897.4,682.8 898.9,683.4 900.5,683.6 902.0,683.4"/><polyline points="800.5,349.0 801.3,347.3 802.4,345.8 803.2,344.2 804.6,343.7 806.0,343.1 807.6,342.7 809.0,342.2 810.4,342.8 811.9,343.3 813.5,343.6 815.0,344.0 816.0,345.6 817.1,347.1 817.9,349.0 816.7,350.7 815.8,352.3 815.0,354.0 813.4,354.3 811.9,354.8 810.5,355.4 809.0,355.7 807.6,355.2 806.0,354.9 804.5,354.5 803.1,353.9 802.2,352.3 801.3,350.7 800.5,349.0"/><polyline points="804.5,349.0 805.3,347.5 806.0,346.0 807.5,345.7 809.0,345.5 810.5,345.8 812.0,346.0 813.0,347.4 813.7,349.0 812.7,350.5 812.0,352.0 810.5,352.3 809.0,352.6 807.5,352.4 805.9,352.2 805.0,350.6 804.5,349.0"/><polyline points="915.6,459.0 916.8,460.1 918.0,461.0 919.3,461.9 920.5,463.0 921.7,464.0 922.9,464.9 924.2,465.9 925.3,467.0 926.5,468.0 927.7,469.0 928.9,470.1 930.0,471.2 931.3,472.0 932.7,472.9 933.8,474.0 934.9,475.1 935.9,476.3 936.9,477.5 937.9,478.7 938.9,479.9 940.0,481.0 941.1,482.2 942.0,483.4 943.0,484.7 943.9,485.9 944.9,487.1 946.0,488.3 947.0,489.5 948.0,490.6 949.2,491.7 950.2,492.9 951.1,494.2 952.1,495.4 953.1,496.7 951.5,497.0 950.0,497.1 948.9,495.9 947.7,494.9 946.5,493.9 945.4,492.9 944.4,491.7 943.3,490.5 942.1,489.5 941.0,488.5 939.9,487.5 938.7,486.4 937.7,485.3 936.6,484.1 935.5,483.1 934.4,482.0 933.2,481.0 932.0,480.0 931.0,478.7 929.9,477.6 928.7,476.5 927.5,475.5 926.4,474.3 925.3,473.2 924.2,472.1 923.2,470.8 922.0,469.7 920.8,468.7 919.7,467.6 918.6,466.4 917.5,465.2 916.4,464.1 915.3,462.9 914.2,462.0 914.7,460.5 915.6,459.0"/></g><g fill="#dcdcd0" fill-opacity=".75"><circle cx="819.8" cy="400.7" r=".7"/><circle cx="814.1" cy="444.0" r=".7"/><circle cx="821.0" cy="380.6" r=".7"/><circle cx="815.4" cy="430.5" r=".7"/><circle cx="813.9" cy="435.5" r=".7"/><circle cx="859.9" cy="539.3" r=".7"/><circle cx="820.5" cy="406.7" r=".7"/><circle cx="847.2" cy="517.4" r=".7"/><circle cx="843.0" cy="504.4" r=".7"/><circle cx="829.2" cy="468.0" r=".7"/><circle cx="821.2" cy="394.3" r=".7"/><circle cx="869.2" cy="550.5" r=".7"/><circle cx="832.0" cy="471.6" r=".7"/><circle cx="845.1" cy="503.3" r=".7"/><circle cx="852.9" cy="541.2" r=".7"/><circle cx="866.9" cy="548.7" r=".7"/><circle cx="819.8" cy="444.7" r=".7"/><circle cx="847.9" cy="529.5" r=".7"/><circle cx="849.7" cy="490.5" r=".7"/><circle cx="836.8" cy="491.1" r=".7"/><circle cx="827.8" cy="465.1" r=".7"/><circle cx="845.6" cy="502.1" r=".7"/><circle cx="816.6" cy="426.0" r=".7"/><circle cx="846.4" cy="519.3" r=".7"/><circle cx="823.3" cy="456.8" r=".7"/><circle cx="850.6" cy="516.3" r=".7"/><circle cx="825.7" cy="458.5" r=".7"/><circle cx="862.1" cy="537.9" r=".7"/><circle cx="869.0" cy="555.0" r=".7"/><circle cx="811.4" cy="439.2" r=".7"/><circle cx="824.8" cy="454.0" r=".7"/><circle cx="817.9" cy="444.3" r=".7"/><circle cx="852.9" cy="518.6" r=".7"/><circle cx="816.8" cy="423.9" r=".7"/><circle cx="816.5" cy="378.1" r=".7"/><circle cx="865.2" cy="547.4" r=".7"/><circle cx="844.8" cy="495.1" r=".7"/><circle cx="863.0" cy="547.4" r=".7"/><circle cx="863.4" cy="549.1" r=".7"/><circle cx="825.1" cy="456.2" r=".7"/><circle cx="935.4" cy="540.8" r=".7"/><circle cx="938.2" cy="545.8" r=".7"/><circle cx="899.1" cy="433.1" r=".7"/><circle cx="894.6" cy="443.2" r=".7"/><circle cx="890.5" cy="445.2" r=".7"/><circle cx="936.2" cy="535.9" r=".7"/><circle cx="896.4" cy="486.1" r=".7"/><circle cx="897.9" cy="436.5" r=".7"/><circle cx="935.3" cy="543.2" r=".7"/><circle cx="898.9" cy="474.6" r=".7"/><circle cx="892.2" cy="444.6" r=".7"/><circle cx="942.2" cy="559.5" r=".7"/><circle cx="941.4" cy="552.3" r=".7"/><circle cx="936.0" cy="547.4" r=".7"/><circle cx="927.8" cy="531.7" r=".7"/><circle cx="907.0" cy="488.8" r=".7"/><circle cx="925.5" cy="519.9" r=".7"/><circle cx="924.8" cy="520.4" r=".7"/><circle cx="900.7" cy="488.5" r=".7"/><circle cx="897.5" cy="485.1" r=".7"/><circle cx="892.1" cy="466.2" r=".7"/><circle cx="934.9" cy="539.5" r=".7"/><circle cx="924.6" cy="520.6" r=".7"/><circle cx="896.9" cy="476.0" r=".7"/><circle cx="897.9" cy="431.7" r=".7"/><circle cx="892.8" cy="457.8" r=".7"/><circle cx="921.0" cy="514.8" r=".7"/><circle cx="895.5" cy="452.0" r=".7"/><circle cx="917.7" cy="507.0" r=".7"/><circle cx="921.1" cy="511.1" r=".7"/><circle cx="755.5" cy="434.2" r=".7"/><circle cx="743.5" cy="441.2" r=".7"/><circle cx="727.8" cy="469.0" r=".7"/><circle cx="744.3" cy="447.4" r=".7"/><circle cx="729.9" cy="469.0" r=".7"/><circle cx="748.7" cy="437.4" r=".7"/><circle cx="746.0" cy="436.4" r=".7"/><circle cx="745.6" cy="432.6" r=".7"/><circle cx="736.9" cy="455.1" r=".7"/><circle cx="732.7" cy="461.8" r=".7"/><circle cx="733.1" cy="452.1" r=".7"/><circle cx="751.6" cy="428.8" r=".7"/><circle cx="727.2" cy="469.3" r=".7"/><circle cx="729.0" cy="454.6" r=".7"/><circle cx="878.3" cy="602.1" r=".7"/><circle cx="781.7" cy="604.5" r=".7"/><circle cx="922.7" cy="595.3" r=".7"/><circle cx="798.0" cy="617.5" r=".7"/><circle cx="977.4" cy="610.4" r=".7"/><circle cx="787.1" cy="602.2" r=".7"/><circle cx="943.4" cy="602.4" r=".7"/><circle cx="842.4" cy="613.4" r=".7"/><circle cx="801.7" cy="611.7" r=".7"/><circle cx="943.1" cy="600.3" r=".7"/><circle cx="971.0" cy="607.0" r=".7"/><circle cx="916.9" cy="596.9" r=".7"/><circle cx="967.7" cy="610.8" r=".7"/><circle cx="882.4" cy="595.8" r=".7"/><circle cx="838.0" cy="432.0" r=".7"/><circle cx="812.0" cy="386.0" r=".7"/><circle cx="884.0" cy="404.0" r=".7"/><circle cx="868.0" cy="379.0" r=".7"/><circle cx="770.0" cy="316.0" r=".7"/><circle cx="740.0" cy="290.0" r=".7"/><circle cx="866.0" cy="700.0" r=".7"/></g></g>
<g stroke="#d6eef5" stroke-width="1"><line x1="381" y1="328" x2="1091" y2="328" stroke-opacity=".3"/><line x1="758.5" y1="177" x2="758.5" y2="720" stroke-opacity=".12"/><g clip-path="url(#cp)"><line x1="381" y1="491" x2="1091" y2="491" stroke-opacity=".2"/><line x1="758.5" y1="177" x2="758.5" y2="720" stroke-opacity=".1"/><line x1="921.5" y1="177" x2="921.5" y2="720" stroke-opacity=".15"/></g></g>
<g transform="translate(813.3,463.3)">
<ellipse cx="6" cy="-9" rx="5" ry="9" transform="rotate(25 6 -9)" fill="#000" fill-opacity=".18" filter="url(#bl2)"/>
<path d="M0,0 C-1.5,-5 -7.7,-11 -7.7,-17.5 A7.7,7.7 0 0 1 7.7,-17.5 C7.7,-11 1.5,-5 0,0 Z" fill="#2f80d2" stroke="#2468b0" stroke-width=".5"/>
<circle cx="-0.3" cy="-17.5" r="2.8" fill="#fff"/></g>
</svg>
<div class="zb" style="top:7px;font-size:15px;line-height:19px;border-bottom:1px solid #ddd">+</div>
<div class="zb" style="top:26px;font-size:15px;line-height:20px;padding-left:3px">&#8722;</div>
</div>
</body></html>
